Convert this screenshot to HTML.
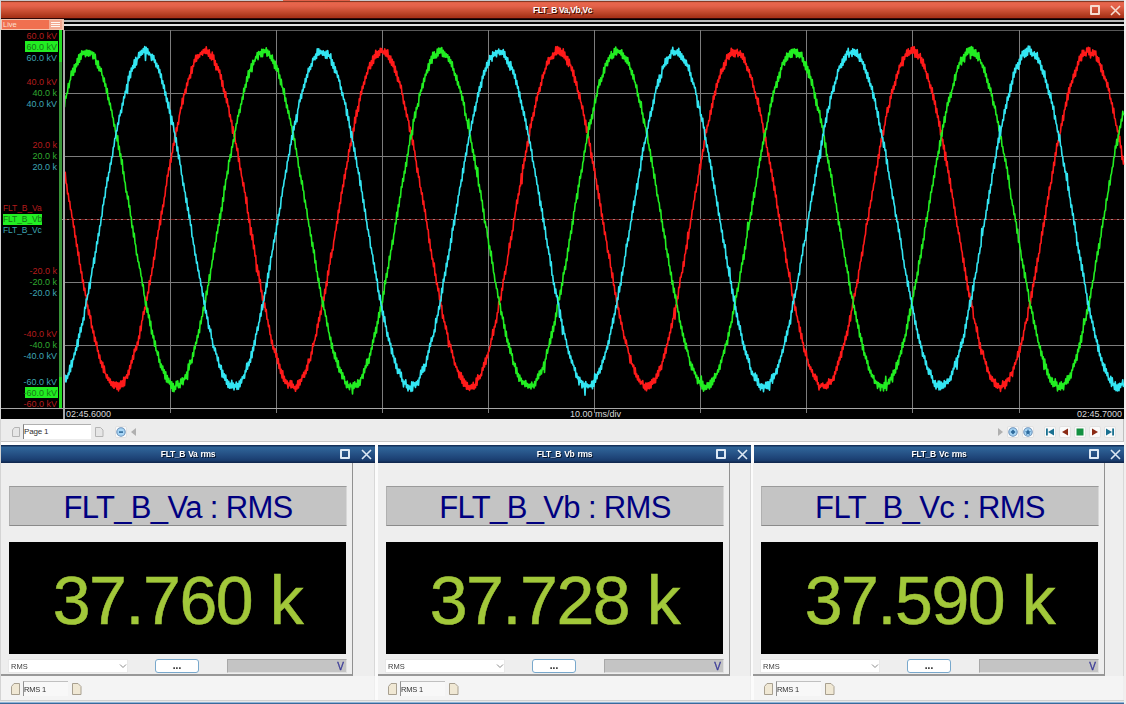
<!DOCTYPE html>
<html><head><meta charset="utf-8">
<style>
*{box-sizing:border-box;margin:0;padding:0}
html,body{width:1126px;height:704px;overflow:hidden;background:#fbfbfb;font-family:"Liberation Sans",sans-serif;position:relative}
.a{position:absolute}
.t{white-space:nowrap;line-height:1}
/* scope window */
#topline{left:0;top:0;width:1126px;height:1px;background:#c8c8cc}
#rstrip{left:1124px;top:0;width:2px;height:704px;background:#f2eeee}
#lstrip{left:0;top:0;width:1px;height:704px;background:#d4d4d4}
#stitle{left:1px;top:1px;width:1123px;height:18px;
 background:linear-gradient(to bottom,#8a3822 0px,#8a3822 1px,#d85e44 1px,#e8664c 2px,#e4624a 5px,#c44a2e 11px,#a83218 16px,#a83218 17px,#300808 17px,#300808 18px);}
#stitle .tt{left:0;width:1123px;top:5px;text-align:center;color:#fff;font-weight:bold;font-size:8.5px;text-shadow:1px 1px 0 #3a0800;letter-spacing:-0.35px}
.icsq{width:10px;height:10px;border:2px solid #f6dcd0;border-radius:1px}
.icx{width:11px;height:11px}
#scopeblk{left:1px;top:19px;width:1123px;height:400px;background:#000}
#live{left:1px;top:19px;width:63px;height:11px;background:#f5c6b0}
#live .in{left:1px;top:1px;width:47px;height:9px;background:#f07050}
#live .tx{left:2px;top:2px;font-size:7.5px;color:#fbe0d0}
#live .mn{left:48px;top:1px;width:13px;height:9px;background:#f2a890}
#live .mn i{position:absolute;left:2px;width:9px;height:1px;background:#fff6f0}
#hl1{left:64px;top:20px;width:1060px;height:2px;background:#b8b8b8}
#hl2{left:64px;top:24px;width:1060px;height:2px;background:#e0e0e0}
#hl3{left:64px;top:30px;width:1060px;height:1px;background:#585858}
#gbar1{left:59px;top:30px;width:3px;height:379px;background:#3a963a}
#gbar2{left:59px;top:30px;width:3px;height:32px;background:#22dd22}
#gbar3{left:59px;top:377px;width:3px;height:32px;background:#22dd22}
#vline{left:63px;top:30px;width:2px;height:389px;background:#a8a8a8}
#hbot{left:1px;top:408px;width:1123px;height:1px;background:#a8a8a8}
.lab{font-size:9px;right:1069px;text-align:right}
.r{color:#b41c1c}.g{color:#30aa30}.c{color:#3ea6b4}
.gb{background:#22ee22;color:#187018}
.tm{font-size:9px;color:#d8d8d8;top:410px}
#svg{left:0;top:0}
/* toolbar */
#tbar{left:1px;top:419px;width:1123px;height:23px;background:#ececec;border-bottom:1px solid #c8c8c8;border-right:1px solid #c0c0c0}
.pg{width:8px;height:9px;background:linear-gradient(135deg,#f6f6f6,#d4d4d4);border:1px solid #bcbcbc;border-radius:2px 1px 1px 1px}
.btn{width:12px;height:12px;background:#fafafa;border:1px solid #e2e2e2;border-radius:2px}
#pfield{left:23px;top:424px;width:68px;height:15px;background:#fff;border-top:1px solid #b0b0b0;border-left:1px solid #808080}
#pfield .t{left:0px;top:3px;font-size:8px;color:#303030;letter-spacing:-0.2px}
#wstrip{left:1px;top:442px;width:1123px;height:3px;background:#ffffff}
/* rms windows */
.win{top:445px;height:259px;background:#eeeeee}
.wt{left:0;top:0;height:18px;background:linear-gradient(to bottom,#143058 0px,#143058 1px,#2f6498 2px,#2a5a8e 6px,#1e4478 13px,#183a6a 16px,#102850 17px,#102850 18px)}
.wt .tt{left:0;top:5px;text-align:center;color:#fff;font-weight:bold;font-size:8.5px;text-shadow:1px 1px 0 #06142a;letter-spacing:-0.3px;word-spacing:1px}
.panel{left:0;top:18px;width:352px;height:213px;background:#eeeeee;border-right:1px solid #909090;border-bottom:2px solid #989898}
.lbl{left:8px;top:23px;width:338px;height:40px;background:#c4c4c4;border-top:1px solid #9a9a9a;border-bottom:1px solid #8a8a8a;border-left:1px solid #b0b0b0;border-right:1px solid #d8d8d8}
.lbl .t{left:0;width:336px;top:5px;text-align:center;color:#000080;font-size:31px;letter-spacing:-0.65px}
.disp{left:8px;top:79px;width:337px;height:112px;background:#000}
.disp .t{left:0;width:337px;top:24px;text-align:center;color:#a2c83a;font-size:68px;letter-spacing:-1.4px;-webkit-text-stroke:0.5px #a2c83a}
.dd{left:7px;top:196px;width:120px;height:14px;background:#fff;border:1px solid #e8e8e8}
.dd .t{left:2px;top:3px;font-size:7.5px;color:#404040}
.dd svg{position:absolute;left:110px;top:4px}
.bt{left:154px;top:196px;width:44px;height:14px;background:#fff;border:1px solid #78a8cc;border-radius:3px}
.bt .t{left:0;width:42px;top:1px;text-align:center;font-size:10px;color:#202020;font-weight:bold}
.vf{left:226px;top:196px;width:120px;height:14px;background:#c4c4c4;border:1px solid #a8a8a8;border-right-color:#e0e0e0;border-bottom-color:#e0e0e0}
.vf .t{right:2px;top:2px;font-size:10px;color:#3a3a98;-webkit-text-stroke:0.3px #3a3a98}
.sbar{left:0;top:231px;height:24px;background:#f4f4f4}
.pgi{width:9px;height:11px;background:linear-gradient(135deg,#fbf6e8,#e8dcc4);border:1px solid #b8b0a0;border-radius:1px 3px 1px 1px}
.rf{top:236px;width:45px;height:15px;background:#f8f8f8;border-top:1px solid #c0c0c0;border-left:1px solid #909090}
.rf .t{left:0px;top:4px;font-size:7.5px;color:#303030;letter-spacing:-0.2px}
.bstrip{height:4px;background:linear-gradient(to bottom,#d0d0d0 0,#d0d0d0 1px,#e8e8e8 1px,#e8e8e8 2px,#90b4d8 2px,#90b4d8 3px,#3a6a9a 3px)}
</style></head><body><div id="root" style="position:absolute;left:0;top:0;width:1126px;height:704px;filter:blur(0.45px)">
<div id="topline" class="a"></div><div class="a" style="left:283px;top:0;width:67px;height:1px;background:#e06048"></div>
<div id="lstrip" class="a"></div>
<div id="rstrip" class="a"></div>
<div id="stitle" class="a">
  <div class="a t tt">FLT_B Va,Vb,Vc</div>
  <div class="a icsq" style="left:1089px;top:4px"></div>
  <svg class="a" style="left:1109px;top:4px" width="11" height="11" viewBox="0 0 11 11"><path d="M1,1 L10,10 M10,1 L1,10" stroke="#f6dcd0" stroke-width="1.6" fill="none"/></svg>
</div>
<div id="scopeblk" class="a"></div>
<div id="hl1" class="a"></div>
<div id="hl2" class="a"></div>
<div id="hl3" class="a"></div>
<div id="live" class="a"><div class="a in"></div><div class="a t tx">Live</div><div class="a mn"><i style="top:2px"></i><i style="top:4px"></i><i style="top:6px"></i></div></div>

<svg id="svg" class="a" width="1126" height="704">
 <g stroke="#7c7c7c" stroke-width="1" fill="none">
<line x1="170.5" y1="30" x2="170.5" y2="413" />
<line x1="276.5" y1="30" x2="276.5" y2="413" />
<line x1="382.5" y1="30" x2="382.5" y2="413" />
<line x1="488.5" y1="30" x2="488.5" y2="413" />
<line x1="594.5" y1="30" x2="594.5" y2="413" />
<line x1="700.5" y1="30" x2="700.5" y2="413" />
<line x1="806.5" y1="30" x2="806.5" y2="413" />
<line x1="912.5" y1="30" x2="912.5" y2="413" />
<line x1="1019.5" y1="30" x2="1019.5" y2="413" />
<line x1="64" y1="93.5" x2="1124" y2="93.5" />
<line x1="64" y1="156.5" x2="1124" y2="156.5" />
<line x1="64" y1="282.5" x2="1124" y2="282.5" />
<line x1="64" y1="345.5" x2="1124" y2="345.5" />
 </g>
 <line x1="61" y1="219.5" x2="1124" y2="219.5" stroke="#7a1a1a" stroke-width="1"/><line x1="61" y1="219.5" x2="1124" y2="219.5" stroke="#a08080" stroke-width="1" stroke-dasharray="2,4"/>
 <g fill="none" stroke-width="1.6" stroke-linejoin="round">
  <polyline stroke="#ff1a1a" points="64.50,175.7 65.25,172.4 66.00,182.9 66.75,184.3 67.50,193.9 68.25,193.4 69.00,201.3 69.75,201.2 70.50,209.8 71.25,210.0 72.00,217.5 72.75,218.3 73.50,227.2 74.25,226.1 75.00,237.1 75.75,236.0 76.50,246.4 77.25,244.6 78.00,255.4 78.75,252.2 79.50,264.3 80.25,264.3 81.00,272.9 81.75,271.9 82.50,282.4 83.25,280.1 84.00,290.4 84.75,288.2 85.50,295.5 86.25,295.5 87.00,306.2 87.75,305.2 88.50,314.6 89.25,310.0 90.00,318.1 90.75,315.9 91.50,327.6 92.25,326.1 93.00,333.0 93.75,331.0 94.50,341.4 95.25,337.3 96.00,345.4 96.75,342.0 97.50,351.3 98.25,350.5 99.00,358.1 99.75,355.1 100.50,363.1 101.25,360.9 102.00,367.5 102.75,362.2 103.50,372.5 104.25,366.0 105.00,373.2 105.75,373.8 106.50,378.0 107.25,374.9 108.00,380.3 108.75,377.5 109.50,382.7 110.25,379.1 111.00,385.3 111.75,381.8 112.50,386.8 113.25,381.9 114.00,388.3 114.75,382.4 115.50,386.7 116.25,382.0 117.00,389.4 117.75,382.9 118.50,390.9 119.25,383.0 120.00,388.6 120.75,381.1 121.50,386.6 122.25,380.7 123.00,386.6 123.75,377.4 124.50,385.7 125.25,377.1 126.00,378.1 126.75,374.7 127.50,378.1 128.25,370.2 129.00,374.8 129.75,365.5 130.50,368.4 131.25,360.6 132.00,362.9 132.75,355.5 133.50,359.1 134.25,349.3 135.00,351.7 135.75,346.6 136.50,350.0 137.25,342.0 138.00,345.2 138.75,336.1 139.50,338.5 140.25,326.2 141.00,330.6 141.75,321.2 142.50,319.9 143.25,311.8 144.00,314.2 144.75,307.3 145.50,309.0 146.25,297.3 147.00,300.3 147.75,292.1 148.50,293.0 149.25,280.7 150.00,284.8 150.75,275.8 151.50,275.5 152.25,267.8 153.00,267.7 153.75,257.3 154.50,259.3 155.25,250.3 156.00,247.5 156.75,237.6 157.50,239.0 158.25,230.4 159.00,229.5 159.75,220.2 160.50,224.6 161.25,211.2 162.00,213.9 162.75,205.1 163.50,206.6 164.25,198.1 165.00,195.8 165.75,186.9 166.50,185.5 167.25,175.2 168.00,176.4 168.75,167.7 169.50,169.8 170.25,159.6 171.00,162.2 171.75,153.5 172.50,152.5 173.25,143.6 174.00,145.2 174.75,135.8 175.50,136.9 176.25,127.8 177.00,131.0 177.75,122.5 178.50,124.3 179.25,115.9 180.00,112.8 180.75,107.3 181.50,108.3 182.25,98.2 183.00,104.0 183.75,94.1 184.50,94.6 185.25,89.3 186.00,92.6 186.75,83.0 187.50,85.4 188.25,78.5 189.00,79.1 189.75,75.0 190.50,77.9 191.25,66.7 192.00,73.1 192.75,65.9 193.50,66.4 194.25,59.6 195.00,61.9 195.75,55.3 196.50,61.1 197.25,54.7 198.00,58.5 198.75,54.9 199.50,57.0 200.25,52.9 201.00,54.2 201.75,51.2 202.50,55.2 203.25,49.6 204.00,53.0 204.75,49.0 205.50,53.4 206.25,46.8 207.00,53.7 207.75,50.4 208.50,56.3 209.25,49.7 210.00,58.4 210.75,54.4 211.50,59.9 212.25,52.1 213.00,59.3 213.75,55.0 214.50,65.2 215.25,60.5 216.00,70.0 216.75,63.9 217.50,70.0 218.25,66.8 219.00,72.5 219.75,70.1 220.50,78.9 221.25,74.8 222.00,86.1 222.75,80.8 223.50,91.7 224.25,89.0 225.00,97.1 225.75,91.8 226.50,102.7 227.25,98.7 228.00,106.7 228.75,106.1 229.50,116.6 230.25,114.8 231.00,121.6 231.75,120.5 232.50,133.1 233.25,126.7 234.00,136.5 234.75,133.2 235.50,143.4 236.25,143.8 237.00,150.7 237.75,148.5 238.50,161.4 239.25,158.2 240.00,169.7 240.75,168.4 241.50,176.1 242.25,178.2 243.00,185.9 243.75,182.8 244.50,192.1 245.25,192.7 246.00,203.5 246.75,197.4 247.50,213.0 248.25,212.5 249.00,222.4 249.75,219.4 250.50,234.7 251.25,227.8 252.00,239.6 252.75,234.9 253.50,248.7 254.25,245.4 255.00,256.1 255.75,255.7 256.50,271.6 257.25,265.0 258.00,275.5 258.75,271.0 259.50,282.8 260.25,279.6 261.00,291.6 261.75,290.4 262.50,300.2 263.25,296.2 264.00,307.2 264.75,303.1 265.50,311.5 266.25,309.4 267.00,319.3 267.75,319.6 268.50,326.7 269.25,325.4 270.00,334.5 270.75,335.0 271.50,343.8 272.25,340.2 273.00,349.0 273.75,347.1 274.50,352.5 275.25,348.7 276.00,357.2 276.75,353.6 277.50,363.5 278.25,358.5 279.00,368.4 279.75,364.4 280.50,373.5 281.25,369.3 282.00,378.0 282.75,370.7 283.50,381.2 284.25,376.2 285.00,383.5 285.75,379.6 286.50,383.6 287.25,381.1 288.00,388.2 288.75,383.1 289.50,385.7 290.25,380.5 291.00,388.0 291.75,380.8 292.50,387.4 293.25,384.4 294.00,388.5 294.75,386.8 295.50,391.3 296.25,385.1 297.00,388.9 297.75,380.8 298.50,388.0 299.25,379.8 300.00,385.0 300.75,379.2 301.50,381.2 302.25,375.1 303.00,377.3 303.75,372.2 304.50,377.2 305.25,370.4 306.00,373.7 306.75,365.2 307.50,370.1 308.25,359.1 309.00,362.8 309.75,359.0 310.50,360.6 311.25,352.1 312.00,353.9 312.75,343.6 313.50,345.9 314.25,341.3 315.00,339.9 315.75,334.8 316.50,335.8 317.25,324.2 318.00,327.5 318.75,317.5 319.50,321.0 320.25,311.4 321.00,314.4 321.75,305.1 322.50,304.5 323.25,297.3 324.00,300.6 324.75,289.4 325.50,293.4 326.25,281.7 327.00,285.8 327.75,271.1 328.50,274.9 329.25,264.8 330.00,264.2 330.75,253.1 331.50,257.4 332.25,249.6 333.00,250.1 333.75,241.2 334.50,238.0 335.25,231.6 336.00,230.2 336.75,221.6 337.50,223.1 338.25,210.2 339.00,212.6 339.75,202.8 340.50,203.5 341.25,192.2 342.00,193.4 342.75,185.1 343.50,186.6 344.25,174.7 345.00,178.8 345.75,168.6 346.50,168.9 347.25,161.8 348.00,161.5 348.75,149.8 349.50,151.5 350.25,143.5 351.00,145.7 351.75,135.4 352.50,139.1 353.25,128.4 354.00,130.9 354.75,117.2 355.50,122.9 356.25,110.3 357.00,116.3 357.75,106.6 358.50,111.2 359.25,98.8 360.00,100.7 360.75,91.5 361.50,94.4 362.25,86.4 363.00,88.4 363.75,82.1 364.50,84.1 365.25,76.3 366.00,78.3 366.75,72.9 367.50,73.8 368.25,67.0 369.00,68.6 369.75,62.5 370.50,68.7 371.25,60.8 372.00,65.4 372.75,56.0 373.50,63.4 374.25,54.9 375.00,58.6 375.75,50.2 376.50,57.6 377.25,51.6 378.00,57.3 378.75,50.7 379.50,55.5 380.25,48.4 381.00,52.3 381.75,48.5 382.50,52.9 383.25,51.0 384.00,54.0 384.75,48.9 385.50,56.0 386.25,50.2 387.00,56.6 387.75,49.8 388.50,59.4 389.25,55.9 390.00,62.6 390.75,56.0 391.50,65.3 392.25,59.3 393.00,66.7 393.75,61.7 394.50,72.2 395.25,66.4 396.00,75.5 396.75,71.2 397.50,81.1 398.25,77.2 399.00,82.5 399.75,81.6 400.50,87.9 401.25,85.2 402.00,94.5 402.75,94.6 403.50,103.8 404.25,101.2 405.00,109.8 405.75,107.4 406.50,116.6 407.25,114.4 408.00,120.1 408.75,120.7 409.50,131.4 410.25,127.2 411.00,136.0 411.75,133.7 412.50,144.8 413.25,140.3 414.00,149.8 414.75,150.9 415.50,159.2 416.25,161.5 417.00,172.1 417.75,168.2 418.50,177.1 419.25,176.7 420.00,187.2 420.75,187.7 421.50,194.1 422.25,192.9 423.00,204.4 423.75,201.0 424.50,211.5 425.25,209.6 426.00,220.4 426.75,221.8 427.50,229.1 428.25,229.8 429.00,242.6 429.75,239.3 430.50,250.7 431.25,249.7 432.00,259.3 432.75,258.7 433.50,266.8 434.25,263.1 435.00,275.4 435.75,274.2 436.50,284.5 437.25,283.4 438.00,291.0 438.75,288.5 439.50,299.7 440.25,296.4 441.00,306.0 441.75,305.5 442.50,318.2 443.25,315.0 444.00,322.0 444.75,321.9 445.50,329.0 446.25,326.0 447.00,334.0 447.75,333.2 448.50,346.9 449.25,341.1 450.00,346.5 450.75,344.5 451.50,352.5 452.25,350.3 453.00,357.9 453.75,357.1 454.50,365.0 455.25,363.1 456.00,367.3 456.75,366.9 457.50,371.4 458.25,370.4 459.00,377.7 459.75,372.0 460.50,379.4 461.25,372.9 462.00,383.1 462.75,376.1 463.50,386.1 464.25,379.1 465.00,386.3 465.75,381.1 466.50,389.2 467.25,382.6 468.00,389.3 468.75,385.7 469.50,390.4 470.25,385.3 471.00,388.9 471.75,384.6 472.50,388.7 473.25,382.4 474.00,389.2 474.75,384.5 475.50,387.8 476.25,378.0 477.00,385.1 477.75,374.7 478.50,379.8 479.25,375.8 480.00,378.6 480.75,374.4 481.50,375.7 482.25,367.9 483.00,370.2 483.75,362.6 484.50,367.0 485.25,358.0 486.00,364.1 486.75,355.4 487.50,357.7 488.25,352.2 489.00,351.2 489.75,347.3 490.50,345.7 491.25,338.5 492.00,339.4 492.75,329.6 493.50,335.2 494.25,326.6 495.00,327.0 495.75,320.3 496.50,322.7 497.25,312.8 498.00,312.5 498.75,301.5 499.50,303.6 500.25,297.2 501.00,300.0 501.75,288.2 502.50,290.2 503.25,279.2 504.00,279.5 504.75,271.5 505.50,274.1 506.25,266.1 507.00,264.9 507.75,256.7 508.50,254.0 509.25,243.3 510.00,247.6 510.75,236.8 511.50,239.6 512.25,230.5 513.00,230.7 513.75,218.6 514.50,219.6 515.25,212.6 516.00,209.6 516.75,200.1 517.50,203.5 518.25,193.7 519.00,194.8 519.75,185.9 520.50,185.9 521.25,173.9 522.00,183.7 522.75,164.7 523.50,168.4 524.25,158.6 525.00,160.7 525.75,151.1 526.50,152.0 527.25,141.8 528.00,145.9 528.75,134.2 529.50,135.9 530.25,124.3 531.00,127.6 531.75,117.6 532.50,120.2 533.25,112.9 534.00,116.0 534.75,105.9 535.50,107.2 536.25,97.1 537.00,100.8 537.75,92.6 538.50,94.1 539.25,87.9 540.00,91.3 540.75,82.8 541.50,85.3 542.25,75.1 543.00,78.1 543.75,72.3 544.50,73.6 545.25,68.4 546.00,69.0 546.75,61.2 547.50,64.9 548.25,57.5 549.00,63.6 549.75,57.9 550.50,59.1 551.25,56.6 552.00,59.0 552.75,53.1 553.50,58.5 554.25,52.9 555.00,54.9 555.75,46.7 556.50,54.8 557.25,46.5 558.00,53.5 558.75,47.2 559.50,54.7 560.25,48.3 561.00,55.6 561.75,50.5 562.50,56.5 563.25,48.9 564.00,57.9 564.75,52.0 565.50,59.6 566.25,56.4 567.00,64.6 567.75,56.6 568.50,66.4 569.25,59.3 570.00,65.2 570.75,65.1 571.50,70.6 572.25,67.1 573.00,75.9 573.75,70.4 574.50,82.1 575.25,76.7 576.00,85.2 576.75,81.9 577.50,91.8 578.25,90.8 579.00,98.6 579.75,92.8 580.50,101.5 581.25,102.8 582.00,108.8 582.75,106.1 583.50,115.4 584.25,115.0 585.00,124.8 585.75,120.2 586.50,132.4 587.25,127.0 588.00,135.8 588.75,136.7 589.50,145.7 590.25,143.6 591.00,157.7 591.75,153.0 592.50,163.3 593.25,161.7 594.00,170.4 594.75,168.4 595.50,178.4 596.25,179.0 597.00,189.5 597.75,185.6 598.50,198.5 599.25,193.7 600.00,205.9 600.75,204.0 601.50,216.1 602.25,214.0 603.00,224.2 603.75,222.8 604.50,234.4 605.25,232.0 606.00,239.8 606.75,241.7 607.50,252.3 608.25,250.7 609.00,258.3 609.75,254.6 610.50,267.2 611.25,267.9 612.00,277.6 612.75,273.1 613.50,285.1 614.25,285.0 615.00,294.4 615.75,292.8 616.50,301.8 617.25,300.9 618.00,309.1 618.75,308.1 619.50,318.0 620.25,315.4 621.00,324.3 621.75,322.4 622.50,329.7 623.25,330.8 624.00,338.7 624.75,336.9 625.50,343.5 626.25,340.0 627.00,346.6 627.75,347.4 628.50,353.0 629.25,353.8 630.00,362.9 630.75,355.6 631.50,363.9 632.25,363.8 633.00,366.8 633.75,365.2 634.50,374.0 635.25,367.9 636.00,376.9 636.75,374.1 637.50,379.9 638.25,375.9 639.00,381.8 639.75,379.3 640.50,384.0 641.25,381.4 642.00,383.8 642.75,380.6 643.50,387.9 644.25,384.6 645.00,389.6 645.75,383.0 646.50,390.8 647.25,383.1 648.00,388.6 648.75,382.9 649.50,388.7 650.25,381.7 651.00,388.0 651.75,379.8 652.50,384.2 653.25,378.2 654.00,383.2 654.75,378.4 655.50,382.7 656.25,374.0 657.00,378.1 657.75,370.5 658.50,376.0 659.25,366.5 660.00,370.8 660.75,365.3 661.50,369.5 662.25,361.6 663.00,361.4 663.75,354.0 664.50,358.0 665.25,348.2 666.00,353.3 666.75,344.3 667.50,345.5 668.25,337.9 669.00,339.9 669.75,332.2 670.50,332.7 671.25,323.7 672.00,327.7 672.75,318.8 673.50,317.9 674.25,308.1 675.00,319.1 675.75,305.0 676.50,306.9 677.25,296.9 678.00,298.6 678.75,287.2 679.50,287.6 680.25,277.4 681.00,277.4 681.75,272.6 682.50,272.6 683.25,261.9 684.00,266.3 684.75,254.6 685.50,253.3 686.25,245.4 687.00,248.6 687.75,232.4 688.50,238.7 689.25,229.2 690.00,228.1 690.75,219.9 691.50,217.5 692.25,209.9 693.00,209.0 693.75,201.4 694.50,200.0 695.25,191.5 696.00,192.1 696.75,184.4 697.50,185.5 698.25,176.1 699.00,174.0 699.75,164.3 700.50,168.9 701.25,159.9 702.00,158.6 702.75,149.7 703.50,151.0 704.25,141.2 705.00,139.0 705.75,129.8 706.50,132.4 707.25,125.4 708.00,125.8 708.75,120.6 709.50,120.7 710.25,110.5 711.00,114.2 711.75,103.8 712.50,107.5 713.25,96.1 714.00,99.2 714.75,91.2 715.50,94.9 716.25,83.8 717.00,87.3 717.75,80.0 718.50,82.1 719.25,76.1 720.00,78.1 720.75,69.3 721.50,73.7 722.25,68.3 723.00,71.1 723.75,62.9 724.50,68.9 725.25,60.2 726.00,65.2 726.75,54.8 727.50,58.5 728.25,53.8 729.00,59.5 729.75,52.7 730.50,56.4 731.25,48.2 732.00,55.2 732.75,49.5 733.50,56.5 734.25,50.3 735.00,56.9 735.75,50.3 736.50,53.5 737.25,49.3 738.00,56.6 738.75,52.4 739.50,55.3 740.25,50.8 741.00,57.5 741.75,53.4 742.50,59.2 743.25,53.9 744.00,62.4 744.75,57.3 745.50,64.4 746.25,63.7 747.00,70.5 747.75,66.8 748.50,72.0 749.25,69.5 750.00,77.1 750.75,74.9 751.50,79.7 752.25,77.8 753.00,87.2 753.75,86.0 754.50,92.2 755.25,91.8 756.00,98.3 756.75,97.0 757.50,104.2 758.25,98.2 759.00,111.1 759.75,107.8 760.50,115.4 761.25,115.1 762.00,122.7 762.75,123.4 763.50,132.8 764.25,130.2 765.00,140.8 765.75,137.1 766.50,147.3 767.25,147.5 768.00,156.2 768.75,153.3 769.50,163.8 770.25,162.4 771.00,172.0 771.75,169.5 772.50,181.0 773.25,177.7 774.00,190.1 774.75,186.2 775.50,197.0 776.25,195.2 777.00,208.0 777.75,206.3 778.50,216.8 779.25,214.5 780.00,225.7 780.75,222.9 781.50,233.3 782.25,231.7 783.00,240.4 783.75,241.8 784.50,250.9 785.25,248.2 786.00,262.5 786.75,259.4 787.50,267.9 788.25,269.5 789.00,276.6 789.75,272.5 790.50,283.3 791.25,284.2 792.00,295.8 792.75,294.2 793.50,302.9 794.25,301.2 795.00,310.5 795.75,307.0 796.50,315.2 797.25,316.6 798.00,322.2 798.75,321.6 799.50,331.8 800.25,327.4 801.00,338.6 801.75,333.5 802.50,342.7 803.25,342.6 804.00,351.7 804.75,349.1 805.50,355.7 806.25,351.0 807.00,359.3 807.75,359.2 808.50,366.0 809.25,364.7 810.00,369.2 810.75,366.9 811.50,371.9 812.25,369.7 813.00,376.4 813.75,374.1 814.50,379.2 815.25,374.4 816.00,380.8 816.75,376.3 817.50,384.3 818.25,382.8 819.00,389.9 819.75,385.2 820.50,387.4 821.25,383.9 822.00,386.1 822.75,383.1 823.50,387.9 824.25,384.8 825.00,388.3 825.75,384.2 826.50,388.6 827.25,382.3 828.00,387.8 828.75,378.9 829.50,384.0 830.25,379.5 831.00,384.2 831.75,379.6 832.50,381.0 833.25,376.1 834.00,380.3 834.75,371.9 835.50,374.0 836.25,366.9 837.00,370.2 837.75,361.2 838.50,364.7 839.25,357.2 840.00,359.9 840.75,351.8 841.50,357.2 842.25,347.1 843.00,349.4 843.75,343.5 844.50,344.9 845.25,336.2 846.00,339.7 846.75,331.2 847.50,335.5 848.25,325.6 849.00,326.0 849.75,315.9 850.50,320.9 851.25,311.3 852.00,309.8 852.75,303.2 853.50,300.9 854.25,293.7 855.00,295.9 855.75,288.0 856.50,287.3 857.25,279.8 858.00,282.9 858.75,270.4 859.50,269.3 860.25,262.1 861.00,260.9 861.75,252.3 862.50,255.7 863.25,245.7 864.00,243.2 864.75,237.1 865.50,234.2 866.25,223.9 867.00,224.5 867.75,218.3 868.50,220.1 869.25,207.5 870.00,207.9 870.75,200.6 871.50,200.8 872.25,191.2 873.00,190.3 873.75,184.1 874.50,182.3 875.25,172.0 876.00,174.9 876.75,166.3 877.50,167.0 878.25,154.7 879.00,158.3 879.75,146.3 880.50,146.7 881.25,138.3 882.00,141.5 882.75,130.7 883.50,134.9 884.25,126.5 885.00,124.6 885.75,116.8 886.50,116.4 887.25,107.5 888.00,112.1 888.75,105.8 889.50,107.1 890.25,96.6 891.00,98.5 891.75,89.6 892.50,93.1 893.25,86.1 894.00,89.2 894.75,81.9 895.50,85.2 896.25,74.6 897.00,78.2 897.75,71.2 898.50,73.6 899.25,65.2 900.00,67.1 900.75,63.0 901.50,65.7 902.25,57.0 903.00,65.7 903.75,56.7 904.50,59.5 905.25,54.1 906.00,56.2 906.75,50.0 907.50,56.1 908.25,48.8 909.00,55.2 909.75,50.9 910.50,53.8 911.25,47.6 912.00,53.1 912.75,46.9 913.50,52.9 914.25,46.8 915.00,57.1 915.75,49.9 916.50,57.3 917.25,49.7 918.00,58.9 918.75,54.9 919.50,57.4 920.25,53.5 921.00,63.0 921.75,57.8 922.50,66.0 923.25,59.2 924.00,68.7 924.75,64.4 925.50,71.4 926.25,71.7 927.00,78.4 927.75,73.7 928.50,81.1 929.25,81.2 930.00,88.0 930.75,85.1 931.50,92.5 932.25,87.8 933.00,99.7 933.75,94.9 934.50,104.3 935.25,101.1 936.00,112.7 936.75,108.6 937.50,117.4 938.25,116.0 939.00,126.1 939.75,121.5 940.50,134.9 941.25,130.5 942.00,140.8 942.75,139.4 943.50,148.9 944.25,145.4 945.00,160.2 945.75,152.3 946.50,165.8 947.25,161.6 948.00,172.6 948.75,170.8 949.50,183.2 950.25,178.6 951.00,191.8 951.75,189.5 952.50,197.8 953.25,198.5 954.00,208.2 954.75,207.2 955.50,217.0 956.25,216.5 957.00,226.6 957.75,226.6 958.50,233.8 959.25,232.8 960.00,242.0 960.75,242.9 961.50,250.0 962.25,252.4 963.00,262.3 963.75,258.2 964.50,270.7 965.25,267.7 966.00,280.0 966.75,276.6 967.50,290.0 968.25,286.1 969.00,296.7 969.75,293.2 970.50,300.5 971.25,298.3 972.00,307.4 972.75,306.5 973.50,318.7 974.25,318.7 975.00,323.4 975.75,323.6 976.50,331.6 977.25,327.1 978.00,338.5 978.75,337.6 979.50,348.1 980.25,342.9 981.00,354.2 981.75,349.5 982.50,353.9 983.25,351.1 984.00,358.9 984.75,358.9 985.50,363.9 986.25,361.8 987.00,371.4 987.75,367.4 988.50,373.0 989.25,372.2 990.00,379.1 990.75,375.4 991.50,381.0 992.25,376.9 993.00,381.5 993.75,379.3 994.50,386.3 995.25,379.4 996.00,387.5 996.75,383.1 997.50,388.1 998.25,383.5 999.00,387.6 999.75,385.8 1000.50,391.5 1001.25,385.6 1002.00,387.7 1002.75,380.9 1003.50,386.4 1004.25,381.8 1005.00,388.7 1005.75,380.1 1006.50,385.6 1007.25,378.2 1008.00,380.9 1008.75,377.8 1009.50,381.4 1010.25,372.8 1011.00,375.3 1011.75,372.0 1012.50,376.5 1013.25,367.1 1014.00,368.9 1014.75,362.8 1015.50,364.2 1016.25,359.7 1017.00,359.7 1017.75,351.5 1018.50,356.8 1019.25,346.7 1020.00,352.2 1020.75,343.4 1021.50,344.3 1022.25,337.6 1023.00,340.0 1023.75,331.0 1024.50,329.6 1025.25,322.4 1026.00,323.4 1026.75,318.7 1027.50,320.3 1028.25,307.6 1029.00,308.0 1029.75,300.5 1030.50,303.6 1031.25,291.8 1032.00,297.3 1032.75,284.2 1033.50,286.4 1034.25,277.0 1035.00,279.4 1035.75,266.7 1036.50,271.9 1037.25,258.4 1038.00,261.5 1038.75,253.7 1039.50,253.0 1040.25,243.9 1041.00,243.1 1041.75,231.7 1042.50,235.0 1043.25,223.1 1044.00,226.5 1044.75,215.7 1045.50,217.7 1046.25,205.5 1047.00,206.4 1047.75,196.9 1048.50,199.0 1049.25,187.1 1050.00,189.5 1050.75,182.7 1051.50,183.0 1052.25,171.5 1053.00,173.1 1053.75,162.2 1054.50,165.4 1055.25,152.9 1056.00,155.1 1056.75,143.6 1057.50,145.8 1058.25,140.2 1059.00,142.0 1059.75,134.2 1060.50,131.9 1061.25,123.8 1062.00,125.5 1062.75,115.6 1063.50,120.4 1064.25,110.2 1065.00,109.7 1065.75,102.2 1066.50,105.9 1067.25,93.3 1068.00,99.6 1068.75,87.7 1069.50,93.1 1070.25,84.1 1071.00,86.2 1071.75,80.7 1072.50,82.8 1073.25,74.3 1074.00,77.6 1074.75,70.3 1075.50,76.1 1076.25,67.2 1077.00,70.5 1077.75,61.6 1078.50,64.7 1079.25,56.3 1080.00,60.7 1080.75,54.2 1081.50,60.8 1082.25,50.4 1083.00,56.4 1083.75,50.3 1084.50,55.3 1085.25,52.4 1086.00,55.9 1086.75,48.0 1087.50,52.0 1088.25,47.3 1089.00,54.8 1089.75,47.9 1090.50,57.9 1091.25,52.5 1092.00,55.4 1092.75,49.9 1093.50,55.9 1094.25,50.9 1095.00,54.7 1095.75,51.0 1096.50,61.0 1097.25,56.5 1098.00,62.1 1098.75,57.9 1099.50,65.0 1100.25,63.6 1101.00,71.7 1101.75,65.1 1102.50,75.4 1103.25,70.8 1104.00,78.7 1104.75,76.3 1105.50,80.7 1106.25,79.5 1107.00,87.0 1107.75,82.5 1108.50,90.7 1109.25,88.7 1110.00,99.0 1110.75,98.3 1111.50,103.8 1112.25,102.9 1113.00,112.9 1113.75,108.3 1114.50,118.2 1115.25,119.1 1116.00,125.5 1116.75,125.7 1117.50,131.7 1118.25,130.9 1119.00,141.4 1119.75,136.4 1120.50,147.6 1121.25,146.0 1122.00,159.5 1122.75,156.2 1123.50,164.8"/>
  <polyline stroke="#22ee22" points="64.50,107.1 65.25,96.2 66.00,98.2 66.75,93.3 67.50,93.0 68.25,83.5 69.00,87.7 69.75,80.8 70.50,79.6 71.25,71.0 72.00,75.4 72.75,68.3 73.50,75.3 74.25,64.9 75.00,71.9 75.75,63.7 76.50,66.8 77.25,58.6 78.00,64.8 78.75,54.7 79.50,62.1 80.25,53.6 81.00,59.3 81.75,50.8 82.50,54.7 83.25,51.2 84.00,54.4 84.75,51.1 85.50,56.7 86.25,50.0 87.00,55.5 87.75,50.3 88.50,56.1 89.25,50.6 90.00,55.6 90.75,51.1 91.50,53.9 92.25,52.1 93.00,58.9 93.75,52.6 94.50,58.4 95.25,54.2 96.00,64.4 96.75,60.5 97.50,67.9 98.25,61.0 99.00,70.8 99.75,66.7 100.50,71.2 101.25,68.5 102.00,75.2 102.75,75.9 103.50,81.6 104.25,78.0 105.00,86.1 105.75,84.0 106.50,93.1 107.25,88.6 108.00,99.6 108.75,97.8 109.50,104.6 110.25,103.3 111.00,110.1 111.75,110.0 112.50,117.0 113.25,118.1 114.00,126.1 114.75,124.6 115.50,131.9 116.25,133.2 117.00,140.9 117.75,135.9 118.50,149.5 119.25,146.3 120.00,156.5 120.75,153.9 121.50,164.2 122.25,159.8 123.00,173.6 123.75,171.8 124.50,181.0 125.25,183.1 126.00,192.1 126.75,191.6 127.50,198.9 128.25,196.3 129.00,207.3 129.75,205.8 130.50,215.8 131.25,217.1 132.00,227.8 132.75,226.0 133.50,236.9 134.25,233.2 135.00,242.9 135.75,245.4 136.50,254.9 137.25,254.4 138.00,261.6 138.75,261.9 139.50,268.0 140.25,268.8 141.00,275.7 141.75,277.7 142.50,285.9 143.25,284.6 144.00,294.4 144.75,297.0 145.50,305.2 146.25,301.8 147.00,312.2 147.75,308.3 148.50,317.6 149.25,315.0 150.00,325.6 150.75,321.4 151.50,334.0 152.25,330.4 153.00,337.9 153.75,335.9 154.50,346.3 155.25,341.0 156.00,350.6 156.75,350.5 157.50,355.1 158.25,352.1 159.00,362.3 159.75,359.5 160.50,367.4 161.25,364.0 162.00,369.9 162.75,366.1 163.50,373.2 164.25,369.7 165.00,378.9 165.75,371.9 166.50,381.9 167.25,375.5 168.00,382.6 168.75,378.4 169.50,384.0 170.25,380.9 171.00,388.2 171.75,381.8 172.50,391.3 173.25,383.5 174.00,391.7 174.75,386.2 175.50,389.4 176.25,381.2 177.00,385.7 177.75,380.8 178.50,387.6 179.25,383.5 180.00,387.7 180.75,379.0 181.50,383.8 182.25,377.9 183.00,384.6 183.75,378.3 184.50,379.6 185.25,374.7 186.00,378.5 186.75,372.0 187.50,379.4 188.25,364.1 189.00,369.9 189.75,360.4 190.50,364.0 191.25,360.1 192.00,362.8 192.75,352.8 193.50,356.3 194.25,346.9 195.00,348.8 195.75,342.4 196.50,343.4 197.25,335.6 198.00,337.5 198.75,329.7 199.50,332.6 200.25,321.0 201.00,323.8 201.75,316.7 202.50,316.3 203.25,307.2 204.00,310.2 204.75,303.2 205.50,302.2 206.25,291.2 207.00,294.6 207.75,285.7 208.50,285.1 209.25,274.9 210.00,280.0 210.75,269.3 211.50,267.6 212.25,260.7 213.00,259.1 213.75,248.2 214.50,252.0 215.25,242.5 216.00,241.7 216.75,232.1 217.50,233.1 218.25,224.9 219.00,225.5 219.75,214.0 220.50,218.8 221.25,207.7 222.00,211.0 222.75,197.7 223.50,201.2 224.25,186.4 225.00,189.7 225.75,179.6 226.50,178.8 227.25,171.3 228.00,173.8 228.75,160.2 229.50,161.4 230.25,154.5 231.00,157.2 231.75,146.7 232.50,147.2 233.25,139.7 234.00,141.4 234.75,131.8 235.50,130.2 236.25,123.5 237.00,123.4 237.75,115.6 238.50,116.1 239.25,109.6 240.00,112.4 240.75,104.0 241.50,104.1 242.25,97.1 243.00,99.3 243.75,88.2 244.50,91.7 245.25,84.5 246.00,87.2 246.75,76.7 247.50,81.3 248.25,70.7 249.00,77.8 249.75,69.5 250.50,71.1 251.25,63.9 252.00,71.8 252.75,60.4 253.50,64.6 254.25,60.2 255.00,61.1 255.75,56.6 256.50,57.8 257.25,52.6 258.00,59.7 258.75,51.6 259.50,54.4 260.25,51.8 261.00,56.8 261.75,49.3 262.50,56.6 263.25,49.3 264.00,52.8 264.75,49.9 265.50,52.5 266.25,47.8 267.00,56.3 267.75,50.0 268.50,55.4 269.25,51.3 270.00,58.1 270.75,55.6 271.50,60.7 272.25,55.1 273.00,63.4 273.75,60.0 274.50,68.4 275.25,61.4 276.00,70.1 276.75,65.2 277.50,71.3 278.25,68.6 279.00,78.5 279.75,75.0 280.50,84.7 281.25,79.4 282.00,87.0 282.75,87.7 283.50,94.0 284.25,88.8 285.00,101.2 285.75,98.1 286.50,107.6 287.25,105.1 288.00,113.1 288.75,110.7 289.50,118.8 290.25,118.6 291.00,125.1 291.75,125.8 292.50,134.2 293.25,132.3 294.00,140.3 294.75,138.9 295.50,148.9 296.25,148.5 297.00,156.8 297.75,157.3 298.50,167.3 299.25,167.3 300.00,176.4 300.75,175.4 301.50,184.0 302.25,180.9 303.00,190.0 303.75,191.2 304.50,202.0 305.25,200.2 306.00,208.2 306.75,208.9 307.50,217.9 308.25,219.7 309.00,226.5 309.75,227.2 310.50,236.0 311.25,235.0 312.00,246.2 312.75,242.5 313.50,252.6 314.25,250.1 315.00,262.9 315.75,260.7 316.50,271.5 317.25,271.8 318.00,281.0 318.75,278.4 319.50,288.2 320.25,287.7 321.00,296.5 321.75,296.9 322.50,306.5 323.25,301.0 324.00,309.7 324.75,309.7 325.50,316.2 326.25,316.1 327.00,326.0 327.75,323.2 328.50,331.5 329.25,333.4 330.00,339.6 330.75,337.3 331.50,348.1 332.25,343.3 333.00,352.9 333.75,351.2 334.50,358.6 335.25,352.7 336.00,361.5 336.75,358.1 337.50,367.4 338.25,360.8 339.00,372.0 339.75,367.4 340.50,372.9 341.25,369.7 342.00,378.8 342.75,372.9 343.50,378.8 344.25,376.4 345.00,383.8 345.75,381.9 346.50,387.7 347.25,381.1 348.00,387.4 348.75,384.9 349.50,389.6 350.25,383.3 351.00,386.7 351.75,385.0 352.50,394.0 353.25,382.7 354.00,388.5 354.75,381.9 355.50,386.9 356.25,383.6 357.00,387.4 357.75,379.9 358.50,387.0 359.25,380.4 360.00,385.2 360.75,377.8 361.50,378.0 362.25,374.5 363.00,378.4 363.75,368.8 364.50,372.7 365.25,365.8 366.00,367.7 366.75,359.3 367.50,365.5 368.25,358.5 369.00,363.3 369.75,353.2 370.50,355.1 371.25,348.1 372.00,349.2 372.75,340.0 373.50,342.2 374.25,332.7 375.00,336.6 375.75,327.2 376.50,332.9 377.25,321.5 378.00,323.6 378.75,312.6 379.50,317.1 380.25,306.7 381.00,310.9 381.75,301.9 382.50,302.4 383.25,291.8 384.00,294.1 384.75,280.9 385.50,283.7 386.25,273.5 387.00,277.2 387.75,267.5 388.50,268.2 389.25,256.4 390.00,259.7 390.75,250.6 391.50,249.6 392.25,240.4 393.00,244.3 393.75,234.8 394.50,232.0 395.25,223.0 396.00,223.8 396.75,212.4 397.50,216.7 398.25,204.8 399.00,206.7 399.75,197.0 400.50,197.2 401.25,186.7 402.00,187.3 402.75,178.6 403.50,181.2 404.25,171.2 405.00,173.1 405.75,162.6 406.50,166.2 407.25,154.6 408.00,155.1 408.75,146.0 409.50,145.1 410.25,135.0 411.00,138.9 411.75,130.5 412.50,134.8 413.25,119.6 414.00,121.1 414.75,112.1 415.50,117.8 416.25,107.6 417.00,109.0 417.75,103.7 418.50,106.1 419.25,93.2 420.00,95.5 420.75,90.1 421.50,90.9 422.25,83.6 423.00,87.6 423.75,78.4 424.50,81.4 425.25,74.4 426.00,75.4 426.75,70.1 427.50,72.7 428.25,63.7 429.00,70.5 429.75,59.7 430.50,63.4 431.25,56.3 432.00,63.1 432.75,52.2 433.50,58.2 434.25,51.8 435.00,58.2 435.75,54.1 436.50,57.6 437.25,49.1 438.00,55.9 438.75,48.0 439.50,53.3 440.25,48.3 441.00,52.8 441.75,47.5 442.50,56.4 443.25,50.3 444.00,56.9 444.75,52.1 445.50,57.1 446.25,53.7 447.00,57.3 447.75,54.8 448.50,61.5 449.25,56.7 450.00,63.1 450.75,59.8 451.50,66.6 452.25,61.9 453.00,70.3 453.75,68.8 454.50,75.3 455.25,73.5 456.00,80.2 456.75,75.2 457.50,84.9 458.25,81.9 459.00,88.0 459.75,86.5 460.50,92.7 461.25,91.3 462.00,100.2 462.75,96.6 463.50,104.9 464.25,102.6 465.00,115.5 465.75,113.7 466.50,120.1 467.25,120.9 468.00,128.4 468.75,119.0 469.50,134.5 470.25,135.2 471.00,142.2 471.75,142.9 472.50,152.3 473.25,149.6 474.00,160.2 474.75,155.3 475.50,168.9 476.25,166.1 477.00,176.6 477.75,167.8 478.50,185.9 479.25,184.4 480.00,192.2 480.75,190.7 481.50,200.6 482.25,200.4 483.00,211.6 483.75,209.3 484.50,222.6 485.25,221.4 486.00,227.5 486.75,226.9 487.50,236.7 488.25,238.9 489.00,248.4 489.75,246.0 490.50,255.6 491.25,251.4 492.00,263.5 492.75,262.4 493.50,271.9 494.25,274.4 495.00,281.8 495.75,282.8 496.50,288.6 497.25,288.9 498.00,297.7 498.75,296.8 499.50,304.3 500.25,303.7 501.00,314.6 501.75,311.9 502.50,318.8 503.25,317.3 504.00,328.1 504.75,324.9 505.50,336.2 506.25,331.4 507.00,341.9 507.75,339.2 508.50,347.1 509.25,343.4 510.00,353.3 510.75,348.4 511.50,355.2 512.25,353.9 513.00,364.4 513.75,362.1 514.50,366.4 515.25,363.6 516.00,373.4 516.75,367.5 517.50,376.7 518.25,373.6 519.00,381.3 519.75,375.0 520.50,380.6 521.25,378.3 522.00,384.5 522.75,380.9 523.50,384.0 524.25,381.3 525.00,386.7 525.75,380.6 526.50,386.1 527.25,383.4 528.00,388.0 528.75,384.4 529.50,387.4 530.25,384.0 531.00,388.9 531.75,382.0 532.50,386.8 533.25,384.4 534.00,387.9 534.75,381.5 535.50,385.8 536.25,378.7 537.00,380.3 537.75,374.0 538.50,378.7 539.25,371.1 540.00,375.1 540.75,370.1 541.50,373.9 542.25,367.9 543.00,369.4 543.75,362.1 544.50,372.4 545.25,359.2 546.00,358.9 546.75,349.7 547.50,353.1 548.25,348.0 549.00,346.4 549.75,338.9 550.50,343.6 551.25,331.9 552.00,337.6 552.75,326.2 553.50,331.5 554.25,321.7 555.00,325.0 555.75,313.0 556.50,316.5 557.25,304.9 558.00,305.1 558.75,297.4 559.50,299.8 560.25,290.2 561.00,294.1 561.75,283.0 562.50,285.2 563.25,272.7 564.00,274.0 564.75,266.6 565.50,269.4 566.25,259.1 567.00,260.6 567.75,248.2 568.50,250.9 569.25,239.3 570.00,239.6 570.75,231.0 571.50,233.2 572.25,221.3 573.00,224.3 573.75,211.8 574.50,211.1 575.25,202.9 576.00,202.6 576.75,193.8 577.50,198.7 578.25,185.3 579.00,186.7 579.75,176.6 580.50,178.3 581.25,170.1 582.00,172.0 582.75,163.0 583.50,160.6 584.25,151.0 585.00,152.0 585.75,144.1 586.50,143.0 587.25,134.5 588.00,137.8 588.75,122.9 589.50,129.2 590.25,119.7 591.00,123.7 591.75,114.8 592.50,118.6 593.25,108.0 594.00,110.4 594.75,99.5 595.50,102.8 596.25,95.3 597.00,96.2 597.75,86.4 598.50,87.6 599.25,79.7 600.00,85.0 600.75,77.7 601.50,81.4 602.25,75.3 603.00,76.9 603.75,67.6 604.50,73.0 605.25,63.6 606.00,65.8 606.75,60.8 607.50,65.6 608.25,57.9 609.00,61.5 609.75,55.4 610.50,58.0 611.25,51.6 612.00,58.8 612.75,53.9 613.50,57.8 614.25,48.5 615.00,54.7 615.75,47.0 616.50,54.9 617.25,49.3 618.00,52.5 618.75,50.4 619.50,53.3 620.25,50.6 621.00,54.9 621.75,49.7 622.50,58.5 623.25,53.1 624.00,59.0 624.75,55.7 625.50,61.6 626.25,57.0 627.00,63.4 627.75,57.6 628.50,65.2 629.25,62.4 630.00,69.5 630.75,68.4 631.50,74.7 632.25,70.5 633.00,79.0 633.75,74.7 634.50,81.6 635.25,82.3 636.00,87.6 636.75,85.1 637.50,96.0 638.25,93.4 639.00,102.3 639.75,100.3 640.50,107.1 641.25,101.9 642.00,114.0 642.75,113.1 643.50,123.0 644.25,119.1 645.00,126.1 645.75,127.2 646.50,133.6 647.25,131.2 648.00,143.0 648.75,144.3 649.50,150.7 650.25,149.5 651.00,161.4 651.75,157.0 652.50,167.4 653.25,167.5 654.00,178.3 654.75,174.2 655.50,185.0 656.25,185.5 657.00,196.0 657.75,194.9 658.50,201.5 659.25,203.0 660.00,211.5 660.75,209.9 661.50,221.8 662.25,221.0 663.00,231.3 663.75,229.1 664.50,237.9 665.25,236.0 666.00,249.5 666.75,249.0 667.50,257.1 668.25,254.1 669.00,265.6 669.75,265.9 670.50,274.7 671.25,272.2 672.00,284.2 672.75,280.7 673.50,292.4 674.25,288.4 675.00,297.9 675.75,295.1 676.50,304.6 677.25,305.5 678.00,312.0 678.75,311.8 679.50,321.9 680.25,321.1 681.00,328.6 681.75,326.4 682.50,335.8 683.25,333.3 684.00,342.0 684.75,338.7 685.50,348.8 686.25,343.3 687.00,351.3 687.75,350.3 688.50,356.7 689.25,357.2 690.00,365.4 690.75,362.0 691.50,369.8 692.25,364.3 693.00,370.1 693.75,368.4 694.50,373.8 695.25,372.2 696.00,377.6 696.75,375.2 697.50,383.6 698.25,377.5 699.00,383.0 699.75,380.8 700.50,386.0 701.25,376.1 702.00,388.9 702.75,381.3 703.50,391.1 704.25,385.0 705.00,389.7 705.75,385.5 706.50,389.1 707.25,382.7 708.00,387.6 708.75,382.7 709.50,388.9 710.25,380.3 711.00,387.1 711.75,378.4 712.50,384.6 713.25,377.4 714.00,381.5 714.75,373.5 715.50,378.0 716.25,373.8 717.00,374.4 717.75,369.9 718.50,372.0 719.25,365.1 720.00,369.3 720.75,360.4 721.50,362.4 722.25,356.5 723.00,355.8 723.75,350.3 724.50,353.2 725.25,344.3 726.00,345.6 726.75,340.8 727.50,344.5 728.25,332.8 729.00,336.0 729.75,326.3 730.50,327.4 731.25,321.8 732.00,322.4 732.75,311.8 733.50,313.7 734.25,304.5 735.00,307.1 735.75,295.8 736.50,297.0 737.25,288.4 738.00,291.3 738.75,283.0 739.50,282.4 740.25,271.7 741.00,272.3 741.75,263.0 742.50,264.1 743.25,254.9 744.00,259.3 744.75,246.9 745.50,248.9 746.25,239.0 747.00,237.0 747.75,222.3 748.50,229.7 749.25,223.2 750.00,220.5 750.75,212.5 751.50,214.7 752.25,201.5 753.00,204.5 753.75,192.6 754.50,197.3 755.25,187.7 756.00,186.2 756.75,178.4 757.50,177.8 758.25,166.6 759.00,167.6 759.75,158.3 760.50,160.3 761.25,150.4 762.00,151.1 762.75,142.0 763.50,143.9 764.25,133.2 765.00,136.9 765.75,128.5 766.50,129.3 767.25,122.4 768.00,121.4 768.75,113.0 769.50,114.7 770.25,104.2 771.00,106.8 771.75,97.5 772.50,101.6 773.25,91.0 774.00,93.4 774.75,87.1 775.50,87.7 776.25,81.7 777.00,87.3 777.75,76.5 778.50,81.3 779.25,72.2 780.00,77.8 780.75,67.9 781.50,69.4 782.25,62.6 783.00,64.4 783.75,60.1 784.50,65.1 785.25,56.8 786.00,61.4 786.75,53.1 787.50,59.9 788.25,53.6 789.00,56.7 789.75,51.1 790.50,57.5 791.25,49.5 792.00,57.3 792.75,49.3 793.50,53.0 794.25,48.9 795.00,53.9 795.75,49.6 796.50,57.3 797.25,49.3 798.00,56.5 798.75,52.6 799.50,57.8 800.25,52.5 801.00,56.7 801.75,52.4 802.50,61.6 803.25,57.7 804.00,65.8 804.75,61.7 805.50,69.6 806.25,61.7 807.00,72.6 807.75,66.5 808.50,77.4 809.25,70.0 810.00,78.5 810.75,76.7 811.50,85.2 812.25,79.5 813.00,88.0 813.75,87.4 814.50,98.3 815.25,93.1 816.00,105.4 816.75,99.4 817.50,110.1 818.25,107.2 819.00,112.6 819.75,110.5 820.50,122.5 821.25,119.0 822.00,127.1 822.75,126.1 823.50,134.5 824.25,136.2 825.00,147.3 825.75,143.0 826.50,155.6 827.25,154.6 828.00,162.9 828.75,160.4 829.50,170.8 830.25,168.8 831.00,177.2 831.75,174.8 832.50,186.0 833.25,186.5 834.00,195.6 834.75,193.6 835.50,202.9 836.25,203.5 837.00,212.2 837.75,212.2 838.50,224.6 839.25,221.9 840.00,231.2 840.75,229.1 841.50,239.5 842.25,240.5 843.00,248.2 843.75,248.7 844.50,257.0 845.25,257.7 846.00,266.5 846.75,265.1 847.50,272.8 848.25,271.9 849.00,284.9 849.75,282.3 850.50,293.8 851.25,292.0 852.00,298.1 852.75,296.6 853.50,307.5 854.25,305.6 855.00,314.1 855.75,311.7 856.50,321.6 857.25,319.8 858.00,328.3 858.75,325.3 859.50,337.0 860.25,333.6 861.00,341.4 861.75,337.8 862.50,349.6 863.25,344.8 864.00,355.1 864.75,352.9 865.50,358.6 866.25,356.2 867.00,363.4 867.75,360.7 868.50,370.0 869.25,367.1 870.00,373.0 870.75,370.2 871.50,376.6 872.25,374.4 873.00,378.0 873.75,375.5 874.50,383.3 875.25,380.3 876.00,383.5 876.75,381.5 877.50,388.4 878.25,382.5 879.00,386.8 879.75,383.5 880.50,390.7 881.25,384.6 882.00,387.0 882.75,384.9 883.50,390.9 884.25,382.6 885.00,388.3 885.75,376.3 886.50,390.5 887.25,383.0 888.00,384.1 888.75,379.3 889.50,383.6 890.25,377.5 891.00,379.8 891.75,374.0 892.50,382.0 893.25,370.4 894.00,375.2 894.75,369.8 895.50,372.9 896.25,362.6 897.00,368.9 897.75,360.4 898.50,364.8 899.25,355.8 900.00,356.5 900.75,350.9 901.50,353.8 902.25,342.5 903.00,347.2 903.75,339.1 904.50,341.5 905.25,334.5 906.00,335.8 906.75,324.6 907.50,328.7 908.25,316.0 909.00,320.8 909.75,309.0 910.50,315.1 911.25,304.7 912.00,304.9 912.75,296.9 913.50,296.1 914.25,286.9 915.00,289.1 915.75,279.8 916.50,282.4 917.25,272.2 918.00,275.0 918.75,260.7 919.50,263.7 920.25,255.5 921.00,257.8 921.75,244.9 922.50,248.5 923.25,238.9 924.00,239.8 924.75,227.8 925.50,227.0 926.25,217.7 927.00,221.5 927.75,212.0 928.50,210.9 929.25,200.9 930.00,202.8 930.75,192.1 931.50,192.3 932.25,185.2 933.00,185.7 933.75,175.8 934.50,177.3 935.25,165.8 936.00,166.8 936.75,158.2 937.50,159.4 938.25,151.2 939.00,153.3 939.75,140.8 940.50,145.8 941.25,133.0 942.00,136.1 942.75,125.0 943.50,127.0 944.25,116.8 945.00,122.2 945.75,111.7 946.50,112.4 947.25,102.7 948.00,105.6 948.75,97.4 949.50,101.8 950.25,92.9 951.00,97.3 951.75,90.4 952.50,89.2 953.25,83.6 954.00,85.4 954.75,74.8 955.50,80.2 956.25,72.6 957.00,71.5 957.75,65.7 958.50,68.3 959.25,62.6 960.00,63.8 960.75,57.4 961.50,65.0 962.25,57.3 963.00,61.0 963.75,54.6 964.50,62.0 965.25,52.2 966.00,55.7 966.75,48.8 967.50,54.4 968.25,48.0 969.00,52.7 969.75,47.6 970.50,58.7 971.25,46.6 972.00,55.3 972.75,47.2 973.50,55.7 974.25,50.1 975.00,56.5 975.75,49.7 976.50,58.2 977.25,53.1 978.00,60.8 978.75,52.6 979.50,59.5 980.25,59.8 981.00,63.6 981.75,62.8 982.50,67.5 983.25,65.3 984.00,72.4 984.75,67.3 985.50,76.4 986.25,73.9 987.00,82.5 987.75,79.2 988.50,88.1 989.25,83.8 990.00,90.8 990.75,88.0 991.50,96.0 992.25,94.8 993.00,104.9 993.75,101.8 994.50,107.9 995.25,106.2 996.00,114.9 996.75,114.8 997.50,122.4 998.25,121.6 999.00,131.0 999.75,131.2 1000.50,138.6 1001.25,136.6 1002.00,146.4 1002.75,146.5 1003.50,153.3 1004.25,154.2 1005.00,161.1 1005.75,159.0 1006.50,168.3 1007.25,167.2 1008.00,179.2 1008.75,175.5 1009.50,187.9 1010.25,189.7 1011.00,198.9 1011.75,199.4 1012.50,205.5 1013.25,206.0 1014.00,214.7 1014.75,213.8 1015.50,221.3 1016.25,222.3 1017.00,233.3 1017.75,229.2 1018.50,242.1 1019.25,240.9 1020.00,248.0 1020.75,250.8 1021.50,260.3 1022.25,259.1 1023.00,268.0 1023.75,265.2 1024.50,277.8 1025.25,272.7 1026.00,281.9 1026.75,283.4 1027.50,291.0 1028.25,289.7 1029.00,301.3 1029.75,301.3 1030.50,308.1 1031.25,306.5 1032.00,313.4 1032.75,312.1 1033.50,323.5 1034.25,320.5 1035.00,328.9 1035.75,325.8 1036.50,335.7 1037.25,334.5 1038.00,342.1 1038.75,342.4 1039.50,347.9 1040.25,345.7 1041.00,355.8 1041.75,351.4 1042.50,359.0 1043.25,356.8 1044.00,369.5 1044.75,359.1 1045.50,368.7 1046.25,364.3 1047.00,374.8 1047.75,369.3 1048.50,377.9 1049.25,374.3 1050.00,382.0 1050.75,377.3 1051.50,384.1 1052.25,378.1 1053.00,386.6 1053.75,381.9 1054.50,386.1 1055.25,378.9 1056.00,385.7 1056.75,382.1 1057.50,390.9 1058.25,385.6 1059.00,389.3 1059.75,383.1 1060.50,389.9 1061.25,381.8 1062.00,388.3 1062.75,383.7 1063.50,389.8 1064.25,382.7 1065.00,384.1 1065.75,378.9 1066.50,384.0 1067.25,375.8 1068.00,382.9 1068.75,375.6 1069.50,379.9 1070.25,373.1 1071.00,377.9 1071.75,370.1 1072.50,370.2 1073.25,363.9 1074.00,366.6 1074.75,360.0 1075.50,362.8 1076.25,354.7 1077.00,360.1 1077.75,349.3 1078.50,351.7 1079.25,343.1 1080.00,347.8 1080.75,335.9 1081.50,342.2 1082.25,331.5 1083.00,332.6 1083.75,318.9 1084.50,324.4 1085.25,318.8 1086.00,320.4 1086.75,309.7 1087.50,313.8 1088.25,302.8 1089.00,308.1 1089.75,296.6 1090.50,297.8 1091.25,288.1 1092.00,288.2 1092.75,280.7 1093.50,280.5 1094.25,272.9 1095.00,270.2 1095.75,260.7 1096.50,261.6 1097.25,251.8 1098.00,254.8 1098.75,243.9 1099.50,248.1 1100.25,238.6 1101.00,236.4 1101.75,226.4 1102.50,227.1 1103.25,217.8 1104.00,218.9 1104.75,211.2 1105.50,210.5 1106.25,199.0 1107.00,200.2 1107.75,193.9 1108.50,190.6 1109.25,180.8 1110.00,184.9 1110.75,175.8 1111.50,173.5 1112.25,167.5 1113.00,166.5 1113.75,158.0 1114.50,156.7 1115.25,146.0 1116.00,147.9 1116.75,139.3 1117.50,145.2 1118.25,134.8 1119.00,134.1 1119.75,126.2 1120.50,127.6 1121.25,119.2 1122.00,121.0 1122.75,111.2 1123.50,115.3"/>
  <polyline stroke="#33e6f2" points="64.50,382.1 65.25,375.2 66.00,381.9 66.75,375.8 67.50,378.4 68.25,373.1 69.00,374.6 69.75,365.2 70.50,371.8 71.25,360.5 72.00,367.0 72.75,359.1 73.50,359.4 74.25,353.0 75.00,354.7 75.75,347.7 76.50,350.2 77.25,339.8 78.00,346.4 78.75,334.0 79.50,337.2 80.25,327.6 81.00,331.9 81.75,323.8 82.50,324.9 83.25,317.7 84.00,320.0 84.75,307.2 85.50,308.4 86.25,299.1 87.00,299.7 87.75,294.4 88.50,293.4 89.25,282.6 90.00,288.4 90.75,278.2 91.50,275.3 92.25,268.0 93.00,267.5 93.75,258.0 94.50,263.1 95.25,251.8 96.00,252.3 96.75,241.7 97.50,243.7 98.25,233.5 99.00,235.8 99.75,225.8 100.50,225.8 101.25,217.5 102.00,216.2 102.75,205.2 103.50,204.8 104.25,197.3 105.00,197.7 105.75,187.4 106.50,187.5 107.25,177.5 108.00,180.7 108.75,172.3 109.50,172.3 110.25,163.2 111.00,164.3 111.75,157.0 112.50,157.0 113.25,147.5 114.00,146.6 114.75,138.6 115.50,137.9 116.25,130.7 117.00,130.9 117.75,123.1 118.50,124.3 119.25,115.2 120.00,115.8 120.75,110.3 121.50,112.6 122.25,103.2 123.00,105.1 123.75,96.7 124.50,97.8 125.25,91.4 126.00,92.4 126.75,84.5 127.50,93.5 128.25,76.3 129.00,80.8 129.75,71.4 130.50,77.7 131.25,68.1 132.00,71.1 132.75,65.6 133.50,68.5 134.25,59.9 135.00,67.5 135.75,57.2 136.50,65.0 137.25,58.3 138.00,58.7 138.75,52.6 139.50,57.5 140.25,51.2 141.00,55.3 141.75,50.2 142.50,54.1 143.25,48.5 144.00,52.4 144.75,46.6 145.50,60.4 146.25,47.4 147.00,53.5 147.75,48.9 148.50,54.7 149.25,52.3 150.00,55.0 150.75,54.3 151.50,60.5 152.25,54.3 153.00,59.8 153.75,55.5 154.50,62.4 155.25,60.0 156.00,66.8 156.75,63.3 157.50,68.4 158.25,65.5 159.00,72.8 159.75,69.5 160.50,77.4 161.25,74.0 162.00,83.6 162.75,80.7 163.50,88.3 164.25,85.0 165.00,95.1 165.75,92.0 166.50,101.7 167.25,98.2 168.00,108.0 168.75,102.2 169.50,113.3 170.25,110.2 171.00,124.2 171.75,116.4 172.50,124.7 173.25,122.7 174.00,131.2 174.75,133.3 175.50,142.0 176.25,137.9 177.00,151.0 177.75,147.0 178.50,158.7 179.25,155.3 180.00,164.4 180.75,165.4 181.50,174.7 182.25,175.9 183.00,185.5 183.75,183.2 184.50,191.3 185.25,192.4 186.00,202.5 186.75,198.3 187.50,210.3 188.25,207.5 189.00,218.0 189.75,215.3 190.50,225.5 191.25,224.8 192.00,236.8 192.75,237.5 193.50,244.6 194.25,245.5 195.00,255.3 195.75,254.4 196.50,263.2 197.25,262.2 198.00,270.9 198.75,270.4 199.50,278.0 200.25,278.6 201.00,285.8 201.75,286.4 202.50,296.0 203.25,293.4 204.00,304.2 204.75,301.0 205.50,313.0 206.25,310.5 207.00,318.6 207.75,317.2 208.50,328.4 209.25,325.8 210.00,331.7 210.75,329.3 211.50,338.8 212.25,338.7 213.00,347.5 213.75,345.5 214.50,350.6 215.25,348.1 216.00,354.2 216.75,354.0 217.50,360.8 218.25,357.2 219.00,367.2 219.75,364.6 220.50,369.2 221.25,365.6 222.00,377.0 222.75,370.3 223.50,377.8 224.25,373.9 225.00,380.3 225.75,375.0 226.50,384.1 227.25,379.9 228.00,387.5 228.75,381.4 229.50,388.1 230.25,383.4 231.00,388.2 231.75,380.4 232.50,387.6 233.25,383.0 234.00,389.9 234.75,384.5 235.50,387.0 236.25,382.0 237.00,389.5 237.75,383.6 238.50,389.2 239.25,381.1 240.00,386.7 240.75,379.4 241.50,383.0 242.25,376.8 243.00,378.6 243.75,375.1 244.50,378.1 245.25,370.5 246.00,371.9 246.75,363.4 247.50,369.1 248.25,362.1 249.00,365.7 249.75,359.3 250.50,362.3 251.25,351.5 252.00,357.7 252.75,347.2 253.50,350.7 254.25,340.6 255.00,345.2 255.75,334.1 256.50,334.3 257.25,327.1 258.00,330.3 258.75,322.9 259.50,321.4 260.25,313.6 261.00,316.1 261.75,304.7 262.50,309.8 263.25,301.7 264.00,300.7 264.75,292.6 265.50,293.4 266.25,283.4 267.00,286.9 267.75,273.4 268.50,277.7 269.25,265.5 270.00,269.6 270.75,256.8 271.50,257.2 272.25,251.0 273.00,249.0 273.75,240.1 274.50,241.9 275.25,233.1 276.00,234.1 276.75,224.0 277.50,224.6 278.25,214.5 279.00,215.9 279.75,208.2 280.50,208.4 281.25,197.1 282.00,196.3 282.75,187.9 283.50,186.4 284.25,180.2 285.00,178.0 285.75,170.3 286.50,172.0 287.25,161.7 288.00,160.5 288.75,154.5 289.50,154.7 290.25,144.6 291.00,144.7 291.75,135.5 292.50,139.2 293.25,126.9 294.00,130.0 294.75,121.2 295.50,124.1 296.25,114.8 297.00,121.6 297.75,109.7 298.50,107.6 299.25,100.1 300.00,101.7 300.75,94.5 301.50,98.5 302.25,90.1 303.00,91.2 303.75,84.5 304.50,87.4 305.25,78.5 306.00,81.9 306.75,74.5 307.50,77.2 308.25,68.3 309.00,71.8 309.75,66.7 310.50,69.5 311.25,63.7 312.00,66.1 312.75,58.4 313.50,59.8 314.25,56.5 315.00,59.8 315.75,54.0 316.50,58.4 317.25,48.9 318.00,55.3 318.75,48.7 319.50,54.7 320.25,50.2 321.00,53.4 321.75,51.1 322.50,55.2 323.25,50.9 324.00,55.3 324.75,52.0 325.50,58.2 326.25,51.0 327.00,58.4 327.75,50.6 328.50,56.3 329.25,54.9 330.00,58.1 330.75,53.9 331.50,65.1 332.25,59.7 333.00,68.3 333.75,62.5 334.50,72.4 335.25,66.9 336.00,73.2 336.75,71.0 337.50,77.4 338.25,75.4 339.00,81.1 339.75,80.4 340.50,89.2 341.25,87.0 342.00,95.5 342.75,92.7 343.50,99.3 344.25,99.2 345.00,104.4 345.75,103.0 346.50,115.4 347.25,109.5 348.00,120.1 348.75,116.7 349.50,127.7 350.25,126.5 351.00,137.4 351.75,131.9 352.50,141.2 353.25,142.1 354.00,151.2 354.75,148.1 355.50,158.9 356.25,157.2 357.00,167.2 357.75,167.5 358.50,173.8 359.25,172.7 360.00,185.5 360.75,180.7 361.50,191.2 362.25,192.2 363.00,202.5 363.75,199.8 364.50,211.3 365.25,209.2 366.00,219.5 366.75,221.9 367.50,229.6 368.25,229.6 369.00,236.3 369.75,236.5 370.50,247.6 371.25,247.7 372.00,253.5 372.75,255.1 373.50,264.0 374.25,262.9 375.00,272.9 375.75,271.5 376.50,280.3 377.25,279.2 378.00,291.6 378.75,290.6 379.50,299.8 380.25,295.3 381.00,305.1 381.75,306.4 382.50,315.0 383.25,311.2 384.00,321.6 384.75,316.9 385.50,326.5 386.25,326.2 387.00,336.3 387.75,332.6 388.50,340.6 389.25,338.2 390.00,344.6 390.75,343.5 391.50,353.8 392.25,348.2 393.00,356.6 393.75,355.8 394.50,362.8 395.25,358.4 396.00,368.4 396.75,364.0 397.50,373.5 398.25,369.1 399.00,373.3 399.75,369.4 400.50,377.0 401.25,372.4 402.00,381.4 402.75,379.7 403.50,386.9 404.25,381.2 405.00,384.0 405.75,379.7 406.50,387.6 407.25,384.7 408.00,391.0 408.75,385.2 409.50,388.9 410.25,386.3 411.00,391.5 411.75,381.7 412.50,390.9 413.25,382.1 414.00,385.6 414.75,382.8 415.50,387.5 416.25,381.9 417.00,384.9 417.75,380.3 418.50,385.2 419.25,377.7 420.00,377.9 420.75,370.3 421.50,374.5 422.25,366.8 423.00,372.2 423.75,364.4 424.50,371.0 425.25,364.4 426.00,366.2 426.75,356.4 427.50,359.5 428.25,350.9 429.00,352.4 429.75,343.3 430.50,346.3 431.25,337.9 432.00,341.2 432.75,336.1 433.50,336.4 434.25,329.9 435.00,331.8 435.75,318.5 436.50,322.6 437.25,315.3 438.00,315.5 438.75,306.6 439.50,309.0 440.25,300.3 441.00,300.9 441.75,288.3 442.50,292.8 443.25,279.3 444.00,281.2 444.75,272.3 445.50,275.4 446.25,263.2 447.00,266.8 447.75,256.0 448.50,259.5 449.25,249.2 450.00,250.3 450.75,238.9 451.50,242.2 452.25,228.2 453.00,230.3 453.75,220.2 454.50,225.0 455.25,214.1 456.00,214.2 456.75,204.2 457.50,206.0 458.25,195.8 459.00,194.9 459.75,187.5 460.50,186.5 461.25,179.8 462.00,181.0 462.75,168.5 463.50,172.6 464.25,161.8 465.00,160.9 465.75,153.0 466.50,154.9 467.25,144.6 468.00,145.1 468.75,137.8 469.50,135.7 470.25,130.4 471.00,130.1 471.75,121.3 472.50,123.1 473.25,114.8 474.00,115.8 474.75,106.5 475.50,110.9 476.25,102.3 477.00,102.2 477.75,92.7 478.50,96.5 479.25,86.9 480.00,90.9 480.75,82.2 481.50,87.2 482.25,76.4 483.00,78.4 483.75,70.5 484.50,74.9 485.25,68.0 486.00,70.9 486.75,62.6 487.50,67.6 488.25,60.3 489.00,65.2 489.75,55.5 490.50,59.2 491.25,55.7 492.00,61.2 492.75,51.8 493.50,56.4 494.25,52.5 495.00,55.5 495.75,50.6 496.50,56.8 497.25,50.7 498.00,53.0 498.75,49.0 499.50,54.6 500.25,50.6 501.00,54.7 501.75,50.9 502.50,54.1 503.25,49.5 504.00,57.2 504.75,51.5 505.50,59.3 506.25,56.9 507.00,63.6 507.75,57.7 508.50,66.7 509.25,62.1 510.00,70.1 510.75,61.6 511.50,69.2 512.25,67.2 513.00,73.9 513.75,70.0 514.50,78.2 515.25,74.2 516.00,84.5 516.75,80.5 517.50,88.2 518.25,86.6 519.00,96.7 519.75,92.1 520.50,102.7 521.25,100.2 522.00,109.1 522.75,106.9 523.50,115.2 524.25,111.8 525.00,120.9 525.75,119.1 526.50,129.2 527.25,126.6 528.00,134.7 528.75,135.1 529.50,143.0 530.25,142.2 531.00,150.7 531.75,149.6 532.50,161.2 533.25,161.2 534.00,167.5 534.75,168.4 535.50,176.4 536.25,176.8 537.00,184.6 537.75,185.1 538.50,193.9 539.25,192.5 540.00,205.4 540.75,201.4 541.50,210.9 542.25,208.7 543.00,221.7 543.75,218.5 544.50,229.3 545.25,226.9 546.00,239.2 546.75,238.9 547.50,247.6 548.25,246.8 549.00,254.5 549.75,254.2 550.50,265.8 551.25,261.8 552.00,275.2 552.75,275.5 553.50,284.4 554.25,283.0 555.00,293.1 555.75,289.1 556.50,296.6 557.25,295.6 558.00,303.9 558.75,303.0 559.50,317.3 560.25,310.1 561.00,320.9 561.75,319.4 562.50,334.5 563.25,326.4 564.00,333.6 564.75,333.6 565.50,339.4 566.25,339.3 567.00,347.5 567.75,346.3 568.50,353.8 569.25,351.6 570.00,358.2 570.75,355.9 571.50,362.9 572.25,360.3 573.00,365.0 573.75,365.2 574.50,370.4 575.25,367.8 576.00,377.3 576.75,373.4 577.50,378.7 578.25,376.7 579.00,385.0 579.75,377.4 580.50,382.2 581.25,380.5 582.00,387.9 582.75,381.4 583.50,386.8 584.25,383.4 585.00,395.1 585.75,381.5 586.50,386.6 587.25,384.0 588.00,387.8 588.75,384.9 589.50,386.7 590.25,384.9 591.00,386.8 591.75,381.3 592.50,388.8 593.25,380.6 594.00,386.1 594.75,373.5 595.50,382.2 596.25,374.5 597.00,378.6 597.75,372.0 598.50,374.2 599.25,368.4 600.00,372.9 600.75,365.8 601.50,369.3 602.25,360.3 603.00,362.6 603.75,356.7 604.50,359.1 605.25,352.1 606.00,352.2 606.75,346.8 607.50,349.0 608.25,340.8 609.00,343.8 609.75,334.2 610.50,334.1 611.25,327.0 612.00,328.3 612.75,318.2 613.50,323.0 614.25,313.7 615.00,314.7 615.75,305.9 616.50,307.5 617.25,298.1 618.00,299.6 618.75,286.8 619.50,292.0 620.25,283.2 621.00,285.1 621.75,272.2 622.50,275.1 623.25,267.2 624.00,266.7 624.75,257.0 625.50,256.0 626.25,244.4 627.00,246.6 627.75,238.2 628.50,240.6 629.25,230.8 630.00,229.8 630.75,221.8 631.50,220.4 632.25,211.1 633.00,212.4 633.75,201.1 634.50,205.2 635.25,196.4 636.00,194.5 636.75,183.9 637.50,189.0 638.25,179.0 639.00,176.3 639.75,169.1 640.50,170.6 641.25,156.2 642.00,159.7 642.75,147.7 643.50,150.8 644.25,142.5 645.00,143.5 645.75,138.2 646.50,136.7 647.25,128.4 648.00,128.2 648.75,120.2 649.50,120.8 650.25,111.7 651.00,116.3 651.75,107.9 652.50,109.9 653.25,100.1 654.00,103.4 654.75,93.7 655.50,93.0 656.25,86.5 657.00,88.5 657.75,79.5 658.50,86.0 659.25,75.0 660.00,81.9 660.75,75.0 661.50,77.8 662.25,66.3 663.00,68.8 663.75,64.8 664.50,66.6 665.25,58.6 666.00,65.0 666.75,57.2 667.50,63.4 668.25,56.8 669.00,58.3 669.75,54.9 670.50,58.1 671.25,50.4 672.00,53.5 672.75,47.4 673.50,55.0 674.25,50.8 675.00,54.9 675.75,51.0 676.50,53.7 677.25,49.9 678.00,55.6 678.75,48.2 679.50,56.9 680.25,51.9 681.00,59.3 681.75,53.7 682.50,60.6 683.25,56.0 684.00,63.0 684.75,59.2 685.50,65.1 686.25,60.2 687.00,66.2 687.75,64.4 688.50,70.6 689.25,65.2 690.00,75.5 690.75,72.8 691.50,81.5 692.25,78.3 693.00,84.2 693.75,83.0 694.50,87.9 695.25,87.4 696.00,94.5 696.75,95.3 697.50,107.1 698.25,101.1 699.00,108.0 699.75,106.8 700.50,116.0 701.25,114.8 702.00,121.5 702.75,118.3 703.50,128.0 704.25,127.3 705.00,139.4 705.75,137.6 706.50,147.0 707.25,144.9 708.00,151.6 708.75,153.0 709.50,161.9 710.25,159.9 711.00,169.3 711.75,166.8 712.50,180.4 713.25,178.1 714.00,188.5 714.75,185.3 715.50,195.2 716.25,196.4 717.00,205.9 717.75,202.4 718.50,215.3 719.25,213.2 720.00,221.2 720.75,224.0 721.50,232.0 722.25,230.3 723.00,242.3 723.75,239.9 724.50,247.6 725.25,244.8 726.00,258.6 726.75,256.8 727.50,267.7 728.25,266.4 729.00,276.0 729.75,267.8 730.50,283.3 731.25,281.6 732.00,293.4 732.75,289.4 733.50,300.9 734.25,296.2 735.00,309.5 735.75,306.6 736.50,316.6 737.25,313.2 738.00,324.6 738.75,321.4 739.50,329.4 740.25,325.7 741.00,335.4 741.75,333.9 742.50,344.0 743.25,341.2 744.00,349.8 744.75,345.2 745.50,354.8 746.25,351.4 747.00,358.6 747.75,354.8 748.50,362.2 749.25,358.9 750.00,369.2 750.75,368.0 751.50,374.4 752.25,371.3 753.00,375.8 753.75,374.1 754.50,380.4 755.25,373.0 756.00,380.8 756.75,375.1 757.50,385.2 758.25,378.8 759.00,387.3 759.75,384.2 760.50,389.9 761.25,383.8 762.00,388.2 762.75,384.2 763.50,391.6 764.25,385.2 765.00,387.8 765.75,382.3 766.50,388.5 767.25,381.9 768.00,388.8 768.75,381.9 769.50,390.3 770.25,379.5 771.00,381.1 771.75,374.9 772.50,383.3 773.25,373.5 774.00,378.7 774.75,373.6 775.50,374.7 776.25,368.7 777.00,373.6 777.75,364.7 778.50,367.1 779.25,360.0 780.00,361.9 780.75,356.1 781.50,356.2 782.25,349.7 783.00,352.5 783.75,346.2 784.50,344.7 785.25,336.5 786.00,341.4 786.75,331.0 787.50,335.0 788.25,326.5 789.00,327.1 789.75,320.4 790.50,324.0 791.25,311.0 792.00,312.1 792.75,301.6 793.50,303.6 794.25,294.3 795.00,297.4 795.75,290.2 796.50,289.7 797.25,282.5 798.00,280.0 798.75,273.6 799.50,274.8 800.25,263.2 801.00,262.8 801.75,255.4 802.50,255.5 803.25,244.0 804.00,246.0 804.75,240.6 805.50,240.5 806.25,228.5 807.00,231.0 807.75,219.7 808.50,218.6 809.25,211.7 810.00,210.8 810.75,201.6 811.50,201.4 812.25,192.1 813.00,194.8 813.75,184.6 814.50,185.5 815.25,174.6 816.00,176.3 816.75,165.4 817.50,166.8 818.25,156.1 819.00,161.7 819.75,150.5 820.50,157.9 821.25,141.1 822.00,144.9 822.75,134.3 823.50,135.3 824.25,125.5 825.00,126.7 825.75,118.1 826.50,122.2 827.25,109.4 828.00,112.5 828.75,106.6 829.50,108.6 830.25,96.6 831.00,98.7 831.75,91.7 832.50,93.4 833.25,86.1 834.00,91.3 834.75,82.1 835.50,83.6 836.25,77.2 837.00,78.9 837.75,69.5 838.50,71.1 839.25,66.0 840.00,68.0 840.75,63.9 841.50,67.4 842.25,59.0 843.00,65.1 843.75,56.5 844.50,62.0 845.25,54.3 846.00,60.0 846.75,51.2 847.50,54.5 848.25,48.2 849.00,57.2 849.75,52.3 850.50,53.6 851.25,50.8 852.00,56.4 852.75,48.7 853.50,54.3 854.25,49.6 855.00,55.5 855.75,50.2 856.50,56.3 857.25,49.6 858.00,57.8 858.75,54.5 859.50,61.3 860.25,53.5 861.00,61.3 861.75,59.3 862.50,63.9 863.25,61.7 864.00,69.5 864.75,64.6 865.50,72.9 866.25,70.0 867.00,78.3 867.75,72.5 868.50,81.7 869.25,77.8 870.00,86.0 870.75,83.8 871.50,89.3 872.25,86.4 873.00,98.3 873.75,93.0 874.50,100.8 875.25,98.7 876.00,109.2 876.75,107.9 877.50,117.3 878.25,111.7 879.00,124.9 879.75,123.2 880.50,131.9 881.25,129.7 882.00,137.7 882.75,137.3 883.50,147.3 884.25,142.2 885.00,150.8 885.75,149.9 886.50,163.7 887.25,159.5 888.00,171.1 888.75,171.8 889.50,179.4 890.25,180.0 891.00,187.8 891.75,189.2 892.50,198.7 893.25,196.9 894.00,203.8 894.75,206.8 895.50,216.4 896.25,215.0 897.00,222.0 897.75,221.7 898.50,231.7 899.25,229.5 900.00,239.5 900.75,238.6 901.50,247.9 902.25,250.3 903.00,259.2 903.75,260.2 904.50,268.0 905.25,269.0 906.00,275.2 906.75,275.2 907.50,286.3 908.25,281.4 909.00,291.2 909.75,291.7 910.50,299.0 911.25,298.0 912.00,308.6 912.75,306.5 913.50,313.6 914.25,313.5 915.00,324.2 915.75,321.0 916.50,329.6 917.25,329.1 918.00,338.3 918.75,334.6 919.50,343.1 920.25,341.2 921.00,348.0 921.75,346.4 922.50,356.2 923.25,352.9 924.00,358.1 924.75,355.9 925.50,364.6 926.25,361.1 927.00,369.3 927.75,367.4 928.50,374.1 929.25,369.1 930.00,374.4 930.75,370.4 931.50,377.9 932.25,375.8 933.00,382.8 933.75,380.8 934.50,386.5 935.25,380.6 936.00,389.0 936.75,383.4 937.50,387.0 938.25,381.0 939.00,389.9 939.75,381.1 940.50,389.7 941.25,382.0 942.00,388.4 942.75,383.4 943.50,387.9 944.25,380.6 945.00,386.8 945.75,381.6 946.50,383.5 947.25,379.0 948.00,383.5 948.75,379.0 949.50,381.3 950.25,376.0 951.00,380.0 951.75,371.4 952.50,374.4 953.25,368.2 954.00,368.9 954.75,361.5 955.50,366.7 956.25,358.0 957.00,369.2 957.75,355.7 958.50,357.1 959.25,350.2 960.00,351.3 960.75,342.2 961.50,347.2 962.25,339.1 963.00,343.0 963.75,334.5 964.50,337.0 965.25,324.5 966.00,328.2 966.75,317.2 967.50,319.2 968.25,310.3 969.00,309.6 969.75,300.2 970.50,306.2 971.25,297.0 972.00,299.3 972.75,285.9 973.50,290.7 974.25,278.2 975.00,278.9 975.75,272.9 976.50,272.1 977.25,263.1 978.00,263.0 978.75,253.9 979.50,253.8 980.25,247.6 981.00,246.7 981.75,228.5 982.50,235.4 983.25,226.6 984.00,226.6 984.75,219.2 985.50,219.3 986.25,210.4 987.00,210.3 987.75,199.5 988.50,203.5 989.25,190.5 990.00,193.1 990.75,184.5 991.50,185.0 992.25,173.4 993.00,173.3 993.75,163.7 994.50,168.3 995.25,157.5 996.00,157.9 996.75,146.8 997.50,149.0 998.25,138.3 999.00,142.5 999.75,125.9 1000.50,135.6 1001.25,127.4 1002.00,126.0 1002.75,119.7 1003.50,120.5 1004.25,109.8 1005.00,113.4 1005.75,104.7 1006.50,108.2 1007.25,97.1 1008.00,100.3 1008.75,93.6 1009.50,96.6 1010.25,84.4 1011.00,91.2 1011.75,81.1 1012.50,83.9 1013.25,72.4 1014.00,77.2 1014.75,68.3 1015.50,72.8 1016.25,64.8 1017.00,68.5 1017.75,62.8 1018.50,69.2 1019.25,59.3 1020.00,64.2 1020.75,55.0 1021.50,59.6 1022.25,51.4 1023.00,55.8 1023.75,50.5 1024.50,57.5 1025.25,49.3 1026.00,56.5 1026.75,48.3 1027.50,55.2 1028.25,46.0 1029.00,51.4 1029.75,46.2 1030.50,54.5 1031.25,49.2 1032.00,56.1 1032.75,53.1 1033.50,55.5 1034.25,51.9 1035.00,58.6 1035.75,53.6 1036.50,59.2 1037.25,52.6 1038.00,62.6 1038.75,58.0 1039.50,63.7 1040.25,60.8 1041.00,70.0 1041.75,65.6 1042.50,74.0 1043.25,70.1 1044.00,77.0 1044.75,71.1 1045.50,82.2 1046.25,80.0 1047.00,87.9 1047.75,84.3 1048.50,94.4 1049.25,90.8 1050.00,97.9 1050.75,93.0 1051.50,103.3 1052.25,102.2 1053.00,109.3 1053.75,106.2 1054.50,118.9 1055.25,115.9 1056.00,123.0 1056.75,125.0 1057.50,131.9 1058.25,131.3 1059.00,140.6 1059.75,134.9 1060.50,145.8 1061.25,146.7 1062.00,155.4 1062.75,156.9 1063.50,165.9 1064.25,163.3 1065.00,172.3 1065.75,171.5 1066.50,180.5 1067.25,173.5 1068.00,190.3 1068.75,186.8 1069.50,196.4 1070.25,198.5 1071.00,207.5 1071.75,205.1 1072.50,215.1 1073.25,213.5 1074.00,224.6 1074.75,221.9 1075.50,232.3 1076.25,232.0 1077.00,245.4 1077.75,242.6 1078.50,253.0 1079.25,250.2 1080.00,260.3 1080.75,257.6 1081.50,270.2 1082.25,264.8 1083.00,276.3 1083.75,273.3 1084.50,283.7 1085.25,284.9 1086.00,292.9 1086.75,293.5 1087.50,304.5 1088.25,301.3 1089.00,310.7 1089.75,308.0 1090.50,317.9 1091.25,315.9 1092.00,322.8 1092.75,321.3 1093.50,330.1 1094.25,327.9 1095.00,337.7 1095.75,335.7 1096.50,341.8 1097.25,340.0 1098.00,351.1 1098.75,345.0 1099.50,355.8 1100.25,354.1 1101.00,360.6 1101.75,357.8 1102.50,365.5 1103.25,363.1 1104.00,370.9 1104.75,364.3 1105.50,372.9 1106.25,368.8 1107.00,375.7 1107.75,372.8 1108.50,380.0 1109.25,378.5 1110.00,382.6 1110.75,376.4 1111.50,386.5 1112.25,377.8 1113.00,385.2 1113.75,383.6 1114.50,389.4 1115.25,381.9 1116.00,390.6 1116.75,385.1 1117.50,390.9 1118.25,384.1 1119.00,390.7 1119.75,383.4 1120.50,387.5 1121.25,383.5 1122.00,384.9 1122.75,379.8 1123.50,387.1"/>
 </g>
</svg>
<div id="gbar1" class="a"></div>
<div id="gbar2" class="a"></div>
<div id="gbar3" class="a"></div>
<div id="vline" class="a"></div>
<div id="hbot" class="a"></div>

<!-- axis labels -->
<div class="a t lab r" style="top:32px">60.0 kV</div>
<div class="a gb" style="left:25px;top:41px;width:33px;height:11px"></div>
<div class="a t lab" style="top:43px;color:#187818">60.0 kV</div>
<div class="a t lab c" style="top:54px">60.0 kV</div>
<div class="a t lab r" style="top:78px">40.0 kV</div>
<div class="a t lab g" style="top:89px">40.0 k</div>
<div class="a t lab c" style="top:100px">40.0 kV</div>
<div class="a t lab r" style="top:141px">20.0 k</div>
<div class="a t lab g" style="top:152px">20.0 k</div>
<div class="a t lab c" style="top:163px">20.0 k</div>
<div class="a t r" style="left:3px;top:204px;font-size:8.5px;letter-spacing:-0.1px">FLT_B_Va</div>
<div class="a gb" style="left:3px;top:214px;width:39px;height:11px"></div>
<div class="a t" style="left:3px;top:215px;font-size:8.5px;letter-spacing:-0.1px;color:#187018">FLT_B_Vb</div>
<div class="a t c" style="left:3px;top:226px;font-size:8.5px;letter-spacing:-0.1px">FLT_B_Vc</div>
<div class="a t lab r" style="top:267px">-20.0 k</div>
<div class="a t lab g" style="top:278px">-20.0 k</div>
<div class="a t lab c" style="top:289px">-20.0 k</div>
<div class="a t lab r" style="top:330px">-40.0 kV</div>
<div class="a t lab g" style="top:341px">-40.0 k</div>
<div class="a t lab c" style="top:352px">-40.0 kV</div>
<div class="a t lab c" style="top:378px">-60.0 kV</div>
<div class="a gb" style="left:25px;top:387px;width:33px;height:11px"></div>
<div class="a t lab" style="top:389px;color:#187818">-60.0 kV</div>
<div class="a t lab r" style="top:400px">-60.0 kV</div>

<div class="a t tm" style="left:66px">02:45.6000</div>
<div class="a t tm" style="left:570px">10.00 ms/div</div>
<div class="a t tm" style="left:1077px">02:45.7000</div>

<!-- toolbar -->
<div id="tbar" class="a"></div>
<svg class="a" style="left:11px;top:427px" width="9" height="10"><path d="M1.5,3 L3.5,0.5 L8.5,0.5 L8.5,9.5 L1.5,9.5 Z" fill="#e6e6e6" stroke="#b4b4b4"/></svg>
<div id="pfield" class="a"><div class="a t">Page 1</div></div>
<svg class="a" style="left:95px;top:427px" width="9" height="10"><path d="M0.5,0.5 L5.5,0.5 L8,3 L8,9.5 L0.5,9.5 Z" fill="#e6e6e6" stroke="#b4b4b4"/></svg>
<div class="a btn" style="left:115px;top:426px"></div>
<svg class="a" style="left:116px;top:427px" width="10" height="10"><circle cx="5" cy="5" r="4.2" fill="#a8d6f6" stroke="#6a90b8" stroke-width="1.1"/><rect x="3" y="4.3" width="4" height="1.6" fill="#2e6a9c"/></svg>
<svg class="a" style="left:131px;top:428px" width="6" height="8"><path d="M5,0 L0,4 L5,8 Z" fill="#b0b0b0"/></svg>
<svg class="a" style="left:998px;top:428px" width="6" height="8"><path d="M0,0 L5,4 L0,8 Z" fill="#b0b0b0"/></svg>
<div class="a btn" style="left:1007px;top:426px"></div>
<svg class="a" style="left:1008px;top:427px" width="10" height="10"><circle cx="5" cy="5" r="4.2" fill="#a8d6f6" stroke="#6a90b8" stroke-width="1.1"/><path d="M5,2.5 L7.5,5 L5,7.5 L2.5,5Z" fill="#2e6a9c"/></svg>
<div class="a btn" style="left:1022px;top:426px"></div>
<svg class="a" style="left:1023px;top:427px" width="10" height="10"><circle cx="5" cy="5" r="4.2" fill="#a8d6f6" stroke="#6a90b8" stroke-width="1.1"/><path d="M5,2 L6,4.2 L8,4.4 L6.4,5.8 L6.9,8 L5,6.8 L3.1,8 L3.6,5.8 L2,4.4 L4,4.2Z" fill="#2e6a9c"/></svg>
<div class="a btn" style="left:1044px;top:426px"></div>
<svg class="a" style="left:1045px;top:427px" width="10" height="10"><rect x="1" y="1.5" width="1.8" height="7" fill="#1a7090"/><path d="M9,1.5 L3,5 L9,8.5Z" fill="#1a7090"/></svg>
<div class="a btn" style="left:1059px;top:426px"></div>
<svg class="a" style="left:1060px;top:427px" width="10" height="10"><path d="M8,1.5 L2,5 L8,8.5Z" fill="#8a2a14"/></svg>
<div class="a btn" style="left:1074px;top:426px"></div>
<svg class="a" style="left:1075px;top:427px" width="10" height="10"><rect x="1.5" y="1.5" width="7" height="7" fill="#129040"/></svg>
<div class="a btn" style="left:1089px;top:426px"></div>
<svg class="a" style="left:1090px;top:427px" width="10" height="10"><path d="M2,1.5 L8,5 L2,8.5Z" fill="#8a2a14"/></svg>
<div class="a btn" style="left:1104px;top:426px"></div>
<svg class="a" style="left:1105px;top:427px" width="10" height="10"><path d="M1,1.5 L7,5 L1,8.5Z" fill="#1a7090"/><rect x="7.2" y="1.5" width="1.8" height="7" fill="#1a7090"/></svg>
<div id="wstrip" class="a"></div>

<!-- RMS windows -->
<div class="a win" style="left:1px;width:374px">
 <div class="a wt" style="width:374px"><div class="a t tt" style="width:374px">FLT_B Va rms</div>
  <div class="a icsq" style="left:339px;top:4px;border-color:#dce8f4"></div>
  <svg class="a" style="left:360px;top:4px" width="11" height="11" viewBox="0 0 11 11"><path d="M1,1 L10,10 M10,1 L1,10" stroke="#dce8f4" stroke-width="1.6" fill="none"/></svg>
 </div>
 <div class="a panel" style="left:0px">
  <div class="a lbl"><div class="a t">FLT_B_Va : RMS</div></div>
  <div class="a disp"><div class="a t">37.760 k</div></div>
  <div class="a dd"><div class="a t">RMS</div><svg width="8" height="5"><path d="M1,0.5 L4,3.5 L7,0.5" stroke="#8a8a8a" fill="none"/></svg></div>
  <div class="a bt"><div class="a t">...</div></div>
  <div class="a vf"><div class="a t">V</div></div>
 </div>
 <div class="a" style="left:373px;top:18px;width:1px;height:213px;background:#d8d8d8"></div>
 <div class="a sbar" style="width:373px"></div>
 <svg class="a" style="left:9px;top:238px" width="10" height="12"><path d="M1.5,3.5 L4,0.5 L9.5,0.5 L9.5,11.5 L1.5,11.5 Z" fill="#f0e8d4" stroke="#a8a090" stroke-width="1"/></svg>
 <div class="a rf" style="left:22px"><div class="a t">RMS 1</div></div>
 <svg class="a" style="left:71px;top:238px" width="10" height="12"><path d="M0.5,0.5 L6,0.5 L9,3.5 L9,11.5 L0.5,11.5 Z" fill="#f0e8d4" stroke="#a8a090" stroke-width="1"/></svg>
 <div class="a bstrip" style="left:-3px;width:377px;top:255px"></div>
</div>
<div class="a win" style="left:378px;width:373px">
 <div class="a wt" style="width:373px"><div class="a t tt" style="width:373px">FLT_B Vb rms</div>
  <div class="a icsq" style="left:338px;top:4px;border-color:#dce8f4"></div>
  <svg class="a" style="left:359px;top:4px" width="11" height="11" viewBox="0 0 11 11"><path d="M1,1 L10,10 M10,1 L1,10" stroke="#dce8f4" stroke-width="1.6" fill="none"/></svg>
 </div>
 <div class="a panel" style="left:0px">
  <div class="a lbl"><div class="a t">FLT_B_Vb : RMS</div></div>
  <div class="a disp"><div class="a t">37.728 k</div></div>
  <div class="a dd"><div class="a t">RMS</div><svg width="8" height="5"><path d="M1,0.5 L4,3.5 L7,0.5" stroke="#8a8a8a" fill="none"/></svg></div>
  <div class="a bt"><div class="a t">...</div></div>
  <div class="a vf"><div class="a t">V</div></div>
 </div>
 <div class="a" style="left:372px;top:18px;width:1px;height:213px;background:#d8d8d8"></div>
 <div class="a sbar" style="width:372px"></div>
 <svg class="a" style="left:9px;top:238px" width="10" height="12"><path d="M1.5,3.5 L4,0.5 L9.5,0.5 L9.5,11.5 L1.5,11.5 Z" fill="#f0e8d4" stroke="#a8a090" stroke-width="1"/></svg>
 <div class="a rf" style="left:22px"><div class="a t">RMS 1</div></div>
 <svg class="a" style="left:71px;top:238px" width="10" height="12"><path d="M0.5,0.5 L6,0.5 L9,3.5 L9,11.5 L0.5,11.5 Z" fill="#f0e8d4" stroke="#a8a090" stroke-width="1"/></svg>
 <div class="a bstrip" style="left:-3px;width:376px;top:255px"></div>
</div>
<div class="a win" style="left:754px;width:370px">
 <div class="a wt" style="width:370px"><div class="a t tt" style="width:370px">FLT_B Vc rms</div>
  <div class="a icsq" style="left:335px;top:4px;border-color:#dce8f4"></div>
  <svg class="a" style="left:356px;top:4px" width="11" height="11" viewBox="0 0 11 11"><path d="M1,1 L10,10 M10,1 L1,10" stroke="#dce8f4" stroke-width="1.6" fill="none"/></svg>
 </div>
 <div class="a panel" style="left:-1px">
  <div class="a lbl"><div class="a t">FLT_B_Vc : RMS</div></div>
  <div class="a disp"><div class="a t">37.590 k</div></div>
  <div class="a dd"><div class="a t">RMS</div><svg width="8" height="5"><path d="M1,0.5 L4,3.5 L7,0.5" stroke="#8a8a8a" fill="none"/></svg></div>
  <div class="a bt"><div class="a t">...</div></div>
  <div class="a vf"><div class="a t">V</div></div>
 </div>
 <div class="a" style="left:369px;top:18px;width:1px;height:213px;background:#d8d8d8"></div>
 <div class="a sbar" style="width:369px"></div>
 <svg class="a" style="left:9px;top:238px" width="10" height="12"><path d="M1.5,3.5 L4,0.5 L9.5,0.5 L9.5,11.5 L1.5,11.5 Z" fill="#f0e8d4" stroke="#a8a090" stroke-width="1"/></svg>
 <div class="a rf" style="left:22px"><div class="a t">RMS 1</div></div>
 <svg class="a" style="left:71px;top:238px" width="10" height="12"><path d="M0.5,0.5 L6,0.5 L9,3.5 L9,11.5 L0.5,11.5 Z" fill="#f0e8d4" stroke="#a8a090" stroke-width="1"/></svg>
 <div class="a bstrip" style="left:-3px;width:373px;top:255px"></div>
</div>
</div></body></html>
